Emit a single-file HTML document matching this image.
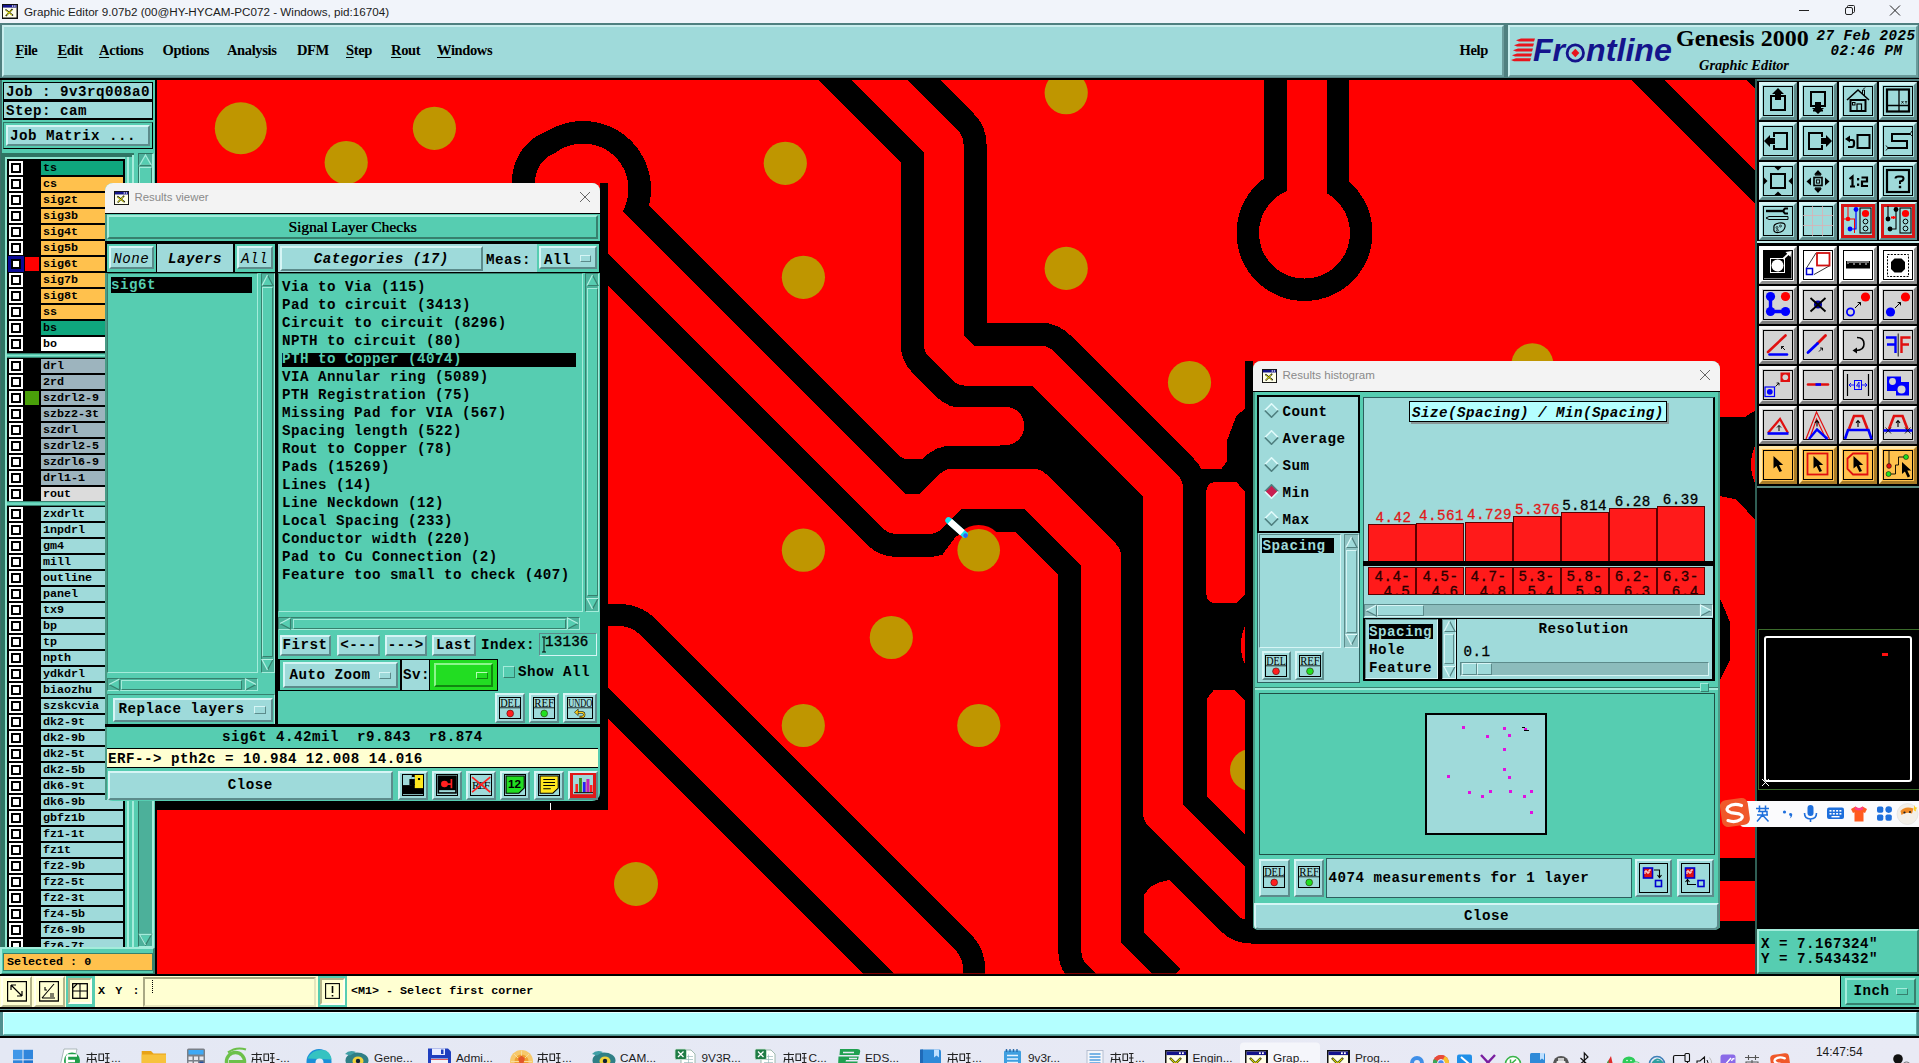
<!DOCTYPE html>
<html><head><meta charset="utf-8"><title>Graphic Editor</title>
<style>
html,body{margin:0;padding:0;width:1919px;height:1063px;overflow:hidden;background:#000;font-family:"Liberation Sans",sans-serif;}
div,span,svg{position:absolute;box-sizing:border-box;}
.m15{font-family:"Liberation Mono",monospace;font-weight:bold;font-size:14.2px;letter-spacing:0.48px;line-height:16px;margin-top:-0.6px;white-space:pre;color:#000;}
.m11{font-family:"Liberation Mono",monospace;font-weight:bold;font-size:11.7px;line-height:14px;white-space:pre;color:#000;}
.ser{font-family:"Liberation Serif",serif;font-weight:bold;white-space:pre;color:#000;}
.sans{font-family:"Liberation Sans",sans-serif;white-space:pre;}
.rc{border-style:solid;border-width:2px;border-color:#d6f5f5 #5c8b8b #5c8b8b #d6f5f5;background:#9edada;}
.sc{border-style:solid;border-width:2px;border-color:#5c8b8b #d6f5f5 #d6f5f5 #5c8b8b;background:#9edada;}
.rt{border-style:solid;border-width:2px;border-color:#a4ecdb #37806e #37806e #a4ecdb;background:#56cdb1;}
.st{border-style:solid;border-width:2px;border-color:#37806e #a4ecdb #a4ecdb #37806e;background:#56cdb1;}

</style></head><body>
<div style="left:0;top:0;width:1919px;height:23px;background:#f1f4fa"></div>
<svg style="left:2px;top:4px" width="16" height="15" viewBox="0 0 16 15"><rect x="0" y="0" width="16" height="15" fill="#111"/><rect x="1" y="1" width="13.5" height="12.5" fill="#ffffe8"/><rect x="1" y="1" width="13.5" height="2.6" fill="#14148c"/><rect x="10" y="1.4" width="1.3" height="1.3" fill="#fff"/><rect x="12.2" y="1.4" width="1.3" height="1.3" fill="#fff"/><path d="M3.5 5.5 L11 11.5 M10.5 5 L3.8 12" stroke="#111" stroke-width="1.5" fill="none"/><path d="M4 6.5 L10 11 M9.8 5.8 L4.3 11.4" stroke="#e8e800" stroke-width="1" fill="none"/></svg>
<div class="sans" style="left:24px;top:4px;font-size:11.67px;line-height:15px;color:#1b1b1b">Graphic Editor 9.07b2 (00@HY-HYCAM-PC072 - Windows, pid:16704)</div>
<svg style="left:1780px;top:-1px" width="139" height="23" viewBox="0 0 139 23"><g stroke="#222" stroke-width="1" fill="none"><path d="M19 11.5 H29"/><rect x="65.5" y="8.5" width="7" height="7" rx="1.5"/><path d="M67.5 8.5 V7.5 Q67.5 6.5 68.5 6.5 H73.5 Q74.5 6.5 74.5 7.5 V12.5 Q74.5 13.5 73.5 13.5 H72.5"/><path d="M110 6.5 L120 16.5 M120 6.5 L110 16.5"/></g></svg>
<div style="left:0;top:23px;width:1919px;height:57px;background:#4f7f7f"></div>
<div style="left:0;top:78px;width:1919px;height:2px;background:#000"></div>
<div class="rc" style="left:2px;top:25px;width:1502px;height:52px;border-width:2px;border-color:#c9eeee #6b9c9c #6b9c9c #c9eeee;background:#9fdada"></div>
<div class="ser" style="left:15.5px;top:41px;font-size:14.5px;line-height:18px;letter-spacing:-0.36px"><span style="position:static;text-decoration:underline;text-underline-offset:2px;text-decoration-thickness:1px">F</span>ile</div>
<div class="ser" style="left:57.5px;top:41px;font-size:14.5px;line-height:18px;letter-spacing:-0.36px"><span style="position:static;text-decoration:underline;text-underline-offset:2px;text-decoration-thickness:1px">E</span>dit</div>
<div class="ser" style="left:99px;top:41px;font-size:14.5px;line-height:18px;letter-spacing:-0.36px"><span style="position:static;text-decoration:underline;text-underline-offset:2px;text-decoration-thickness:1px">A</span>ctions</div>
<div class="ser" style="left:162.5px;top:41px;font-size:14.5px;line-height:18px;letter-spacing:-0.36px">Options</div>
<div class="ser" style="left:227px;top:41px;font-size:14.5px;line-height:18px;letter-spacing:-0.36px">Analysis</div>
<div class="ser" style="left:297px;top:41px;font-size:14.5px;line-height:18px;letter-spacing:-0.36px">DFM</div>
<div class="ser" style="left:346px;top:41px;font-size:14.5px;line-height:18px;letter-spacing:-0.36px"><span style="position:static;text-decoration:underline;text-underline-offset:2px;text-decoration-thickness:1px">S</span>tep</div>
<div class="ser" style="left:391px;top:41px;font-size:14.5px;line-height:18px;letter-spacing:-0.36px"><span style="position:static;text-decoration:underline;text-underline-offset:2px;text-decoration-thickness:1px">R</span>out</div>
<div class="ser" style="left:437px;top:41px;font-size:14.5px;line-height:18px;letter-spacing:-0.36px"><span style="position:static;text-decoration:underline;text-underline-offset:2px;text-decoration-thickness:1px">W</span>indows</div>
<div class="ser" style="left:1459.5px;top:41px;font-size:14.5px;line-height:18px;letter-spacing:-0.36px">Help</div>
<div class="rc" style="left:1508px;top:25px;width:410px;height:52px;border-color:#c9eeee #6b9c9c #6b9c9c #c9eeee;background:#9fdada"></div>
<svg style="left:1510px;top:30px" width="168" height="40" viewBox="1510 30 168 40"><g fill="#e8141c"><path d="M1521 38.5 H1535 L1534 41.5 H1519 L1516 40.2 Z"/><path d="M1519 43.5 H1534 L1533 46.5 H1517 L1514 45.2 Z"/><path d="M1518 48.5 H1533 L1532 51.5 H1516 L1513 50.2 Z"/><path d="M1517 53.5 H1532 L1531 56.5 H1515 L1512 55.2 Z"/><path d="M1516 58.2 H1531 L1530 61.2 H1514 L1511 59.9 Z"/></g><text x="1533" y="61" font-family="Liberation Sans" font-weight="bold" font-style="italic" font-size="31.5" fill="#14148c" textLength="32" lengthAdjust="spacingAndGlyphs">Fr</text><circle cx="1575.3" cy="53" r="8.2" fill="none" stroke="#14148c" stroke-width="2.8"/><path d="M1575.3 48.8 L1579.3 53 L1575.3 57.2 L1571.3 53 Z" fill="#e8141c"/><text x="1586" y="61" font-family="Liberation Sans" font-weight="bold" font-style="italic" font-size="31.5" fill="#14148c" textLength="86" lengthAdjust="spacingAndGlyphs">ntline</text></svg>
<div class="ser" style="left:1676px;top:23.3px;font-size:24px;line-height:30px">Genesis 2000</div>
<div class="ser" style="left:1699px;top:55.8px;font-size:14.4px;line-height:18px;font-style:italic">Graphic Editor</div>
<div class="m15" style="left:1816.5px;top:28.7px;font-style:italic">27 Feb 2025</div>
<div class="m15" style="left:1830.5px;top:43.7px;font-style:italic">02:46 PM</div>
<div style="left:0;top:80px;width:155px;height:895px;background:#56cdb1"></div>
<div style="left:0;top:80px;width:2px;height:895px;background:#3f6f6a"></div>
<div style="left:3px;top:82px;width:150px;height:19px;background:#9fdada;border:1px solid #000;border-width:1px 1px 2px 1px"></div>
<div class="m15" style="left:6px;top:84.7px">Job : 9v3rq008a0</div>
<div style="left:3px;top:101px;width:150px;height:19px;background:#9fdada;border:1px solid #000;border-width:1px 1px 2px 1px"></div>
<div class="m15" style="left:6px;top:103.7px">Step: cam</div>
<div style="left:3px;top:122px;width:150px;height:27px;background:#56cdb1;border:1.3px solid;border-color:#2f7564 #000 #000 #2f7564"></div>
<div class="rc" style="left:6px;top:125px;width:144px;height:21px;"></div>
<div class="m15" style="left:10px;top:128.7px">Job Matrix ...</div>
<div style="left:1px;top:153px;width:126px;height:794px;background:#2f7564"></div>
<div style="left:5px;top:157px;width:122px;height:790px;background:#8fe6d0"></div>
<div style="left:7px;top:159px;width:118px;height:788px;background:#000"></div>
<div style="left:125px;top:153px;width:13px;height:794px;background:#56cdb1"></div>
<div style="left:125px;top:153px;width:9px;height:4px;background:#2f7564"></div>
<div style="left:126.8px;top:157px;width:1.8px;height:790px;background:#a4ecdb"></div>
<div style="left:131.8px;top:155px;width:2.2px;height:792px;background:#a4ecdb"></div>
<div style="left:138px;top:153px;width:15.7px;height:794px;background:#4cb09a;border:1.7px solid #2f7564;border-right:2.4px solid #a4ecdb;border-bottom-color:#a4ecdb"></div>
<svg style="left:138px;top:154px" width="15" height="13" viewBox="0 0 15 13"><path d="M7.5 1 L13.5 11.5 H1.5 Z" fill="#56cdb1" stroke="#a4ecdb" stroke-width="1.3"/><path d="M13.5 11.5 H1.5" stroke="#37806e" stroke-width="1.3"/></svg>
<svg style="left:138px;top:933px" width="15" height="13" viewBox="0 0 15 13"><path d="M7.5 12 L13.5 1.5 H1.5 Z" fill="#56cdb1" stroke="#37806e" stroke-width="1.3"/><path d="M13.5 1.5 H1.5 L7.5 12" fill="none" stroke="#a4ecdb" stroke-width="1.3"/></svg>
<div class="rt" style="left:139px;top:167px;width:13px;height:420px;border-width:1.5px"></div>
<div style="left:9px;top:161px;width:14px;height:14px;background:#fff"></div><div style="left:11px;top:163px;width:10px;height:10px;background:#000"></div><div style="left:13px;top:165px;width:6px;height:6px;background:#fff"></div><div class="m11" style="left:41px;top:161px;width:81.5px;height:14px;background:#0fa67e;padding-left:2px;line-height:14.5px">ts</div>
<div style="left:9px;top:177px;width:14px;height:14px;background:#fff"></div><div style="left:11px;top:179px;width:10px;height:10px;background:#000"></div><div style="left:13px;top:181px;width:6px;height:6px;background:#fff"></div><div class="m11" style="left:41px;top:177px;width:81.5px;height:14px;background:#ffc14d;padding-left:2px;line-height:14.5px">cs</div>
<div style="left:9px;top:193px;width:14px;height:14px;background:#fff"></div><div style="left:11px;top:195px;width:10px;height:10px;background:#000"></div><div style="left:13px;top:197px;width:6px;height:6px;background:#fff"></div><div class="m11" style="left:41px;top:193px;width:81.5px;height:14px;background:#ffc14d;padding-left:2px;line-height:14.5px">sig2t</div>
<div style="left:9px;top:209px;width:14px;height:14px;background:#fff"></div><div style="left:11px;top:211px;width:10px;height:10px;background:#000"></div><div style="left:13px;top:213px;width:6px;height:6px;background:#fff"></div><div class="m11" style="left:41px;top:209px;width:81.5px;height:14px;background:#ffc14d;padding-left:2px;line-height:14.5px">sig3b</div>
<div style="left:9px;top:225px;width:14px;height:14px;background:#fff"></div><div style="left:11px;top:227px;width:10px;height:10px;background:#000"></div><div style="left:13px;top:229px;width:6px;height:6px;background:#fff"></div><div class="m11" style="left:41px;top:225px;width:81.5px;height:14px;background:#ffc14d;padding-left:2px;line-height:14.5px">sig4t</div>
<div style="left:9px;top:241px;width:14px;height:14px;background:#fff"></div><div style="left:11px;top:243px;width:10px;height:10px;background:#000"></div><div style="left:13px;top:245px;width:6px;height:6px;background:#fff"></div><div class="m11" style="left:41px;top:241px;width:81.5px;height:14px;background:#ffc14d;padding-left:2px;line-height:14.5px">sig5b</div>
<div style="left:8px;top:256px;width:16px;height:16px;background:#0a0a96"></div><div style="left:11px;top:259px;width:10px;height:10px;background:#000"></div><div style="left:13px;top:261px;width:6px;height:6px;background:#fff"></div><div style="left:25px;top:257px;width:14px;height:14px;background:#ff0000"></div><div class="m11" style="left:41px;top:257px;width:81.5px;height:14px;background:#ffc14d;padding-left:2px;line-height:14.5px">sig6t</div>
<div style="left:9px;top:273px;width:14px;height:14px;background:#fff"></div><div style="left:11px;top:275px;width:10px;height:10px;background:#000"></div><div style="left:13px;top:277px;width:6px;height:6px;background:#fff"></div><div class="m11" style="left:41px;top:273px;width:81.5px;height:14px;background:#ffc14d;padding-left:2px;line-height:14.5px">sig7b</div>
<div style="left:9px;top:289px;width:14px;height:14px;background:#fff"></div><div style="left:11px;top:291px;width:10px;height:10px;background:#000"></div><div style="left:13px;top:293px;width:6px;height:6px;background:#fff"></div><div class="m11" style="left:41px;top:289px;width:81.5px;height:14px;background:#ffc14d;padding-left:2px;line-height:14.5px">sig8t</div>
<div style="left:9px;top:305px;width:14px;height:14px;background:#fff"></div><div style="left:11px;top:307px;width:10px;height:10px;background:#000"></div><div style="left:13px;top:309px;width:6px;height:6px;background:#fff"></div><div class="m11" style="left:41px;top:305px;width:81.5px;height:14px;background:#ffc14d;padding-left:2px;line-height:14.5px">ss</div>
<div style="left:9px;top:321px;width:14px;height:14px;background:#fff"></div><div style="left:11px;top:323px;width:10px;height:10px;background:#000"></div><div style="left:13px;top:325px;width:6px;height:6px;background:#fff"></div><div class="m11" style="left:41px;top:321px;width:81.5px;height:14px;background:#0fa67e;padding-left:2px;line-height:14.5px">bs</div>
<div style="left:9px;top:337px;width:14px;height:14px;background:#fff"></div><div style="left:11px;top:339px;width:10px;height:10px;background:#000"></div><div style="left:13px;top:341px;width:6px;height:6px;background:#fff"></div><div class="m11" style="left:41px;top:337px;width:81.5px;height:14px;background:#ffffff;padding-left:2px;line-height:14.5px">bo</div>
<div style="left:7px;top:352.5px;width:118px;height:5px;background:#56cdb1;border-top:1px solid #37806e;border-bottom:1px solid #37806e"></div>
<div style="left:7px;top:354.5px;width:118px;height:1.5px;background:#86e2cc"></div>
<div style="left:9px;top:358.5px;width:14px;height:14px;background:#fff"></div><div style="left:11px;top:360.5px;width:10px;height:10px;background:#000"></div><div style="left:13px;top:362.5px;width:6px;height:6px;background:#fff"></div><div class="m11" style="left:41px;top:358.5px;width:81.5px;height:14px;background:#9db4be;padding-left:2px;line-height:14.5px">drl</div>
<div style="left:9px;top:374.5px;width:14px;height:14px;background:#fff"></div><div style="left:11px;top:376.5px;width:10px;height:10px;background:#000"></div><div style="left:13px;top:378.5px;width:6px;height:6px;background:#fff"></div><div class="m11" style="left:41px;top:374.5px;width:81.5px;height:14px;background:#9db4be;padding-left:2px;line-height:14.5px">2rd</div>
<div style="left:9px;top:390.5px;width:14px;height:14px;background:#fff"></div><div style="left:11px;top:392.5px;width:10px;height:10px;background:#000"></div><div style="left:13px;top:394.5px;width:6px;height:6px;background:#fff"></div><div style="left:25px;top:390.5px;width:14px;height:14px;background:#4aa00a"></div><div class="m11" style="left:41px;top:390.5px;width:81.5px;height:14px;background:#9db4be;padding-left:2px;line-height:14.5px">szdrl2-9</div>
<div style="left:9px;top:406.5px;width:14px;height:14px;background:#fff"></div><div style="left:11px;top:408.5px;width:10px;height:10px;background:#000"></div><div style="left:13px;top:410.5px;width:6px;height:6px;background:#fff"></div><div class="m11" style="left:41px;top:406.5px;width:81.5px;height:14px;background:#9db4be;padding-left:2px;line-height:14.5px">szbz2-3t</div>
<div style="left:9px;top:422.5px;width:14px;height:14px;background:#fff"></div><div style="left:11px;top:424.5px;width:10px;height:10px;background:#000"></div><div style="left:13px;top:426.5px;width:6px;height:6px;background:#fff"></div><div class="m11" style="left:41px;top:422.5px;width:81.5px;height:14px;background:#9db4be;padding-left:2px;line-height:14.5px">szdrl</div>
<div style="left:9px;top:438.5px;width:14px;height:14px;background:#fff"></div><div style="left:11px;top:440.5px;width:10px;height:10px;background:#000"></div><div style="left:13px;top:442.5px;width:6px;height:6px;background:#fff"></div><div class="m11" style="left:41px;top:438.5px;width:81.5px;height:14px;background:#9db4be;padding-left:2px;line-height:14.5px">szdrl2-5</div>
<div style="left:9px;top:454.5px;width:14px;height:14px;background:#fff"></div><div style="left:11px;top:456.5px;width:10px;height:10px;background:#000"></div><div style="left:13px;top:458.5px;width:6px;height:6px;background:#fff"></div><div class="m11" style="left:41px;top:454.5px;width:81.5px;height:14px;background:#9db4be;padding-left:2px;line-height:14.5px">szdrl6-9</div>
<div style="left:9px;top:470.5px;width:14px;height:14px;background:#fff"></div><div style="left:11px;top:472.5px;width:10px;height:10px;background:#000"></div><div style="left:13px;top:474.5px;width:6px;height:6px;background:#fff"></div><div class="m11" style="left:41px;top:470.5px;width:81.5px;height:14px;background:#9db4be;padding-left:2px;line-height:14.5px">drl1-1</div>
<div style="left:9px;top:486.5px;width:14px;height:14px;background:#fff"></div><div style="left:11px;top:488.5px;width:10px;height:10px;background:#000"></div><div style="left:13px;top:490.5px;width:6px;height:6px;background:#fff"></div><div class="m11" style="left:41px;top:486.5px;width:81.5px;height:14px;background:#dcdcdc;padding-left:2px;line-height:14.5px">rout</div>
<div style="left:7px;top:501px;width:118px;height:5px;background:#56cdb1;border-top:1px solid #37806e;border-bottom:1px solid #37806e"></div>
<div style="left:7px;top:503px;width:118px;height:1.5px;background:#6fd8c0"></div>
<div style="left:0;top:500px;width:127px;height:447px;overflow:hidden">
<div style="left:9px;top:7px;width:14px;height:14px;background:#fff"></div><div style="left:11px;top:9px;width:10px;height:10px;background:#000"></div><div style="left:13px;top:11px;width:6px;height:6px;background:#fff"></div><div class="m11" style="left:41px;top:7px;width:81.5px;height:14px;background:#9fdada;padding-left:2px;line-height:14.5px">zxdrlt</div>
<div style="left:9px;top:23px;width:14px;height:14px;background:#fff"></div><div style="left:11px;top:25px;width:10px;height:10px;background:#000"></div><div style="left:13px;top:27px;width:6px;height:6px;background:#fff"></div><div class="m11" style="left:41px;top:23px;width:81.5px;height:14px;background:#9fdada;padding-left:2px;line-height:14.5px">1npdrl</div>
<div style="left:9px;top:39px;width:14px;height:14px;background:#fff"></div><div style="left:11px;top:41px;width:10px;height:10px;background:#000"></div><div style="left:13px;top:43px;width:6px;height:6px;background:#fff"></div><div class="m11" style="left:41px;top:39px;width:81.5px;height:14px;background:#9fdada;padding-left:2px;line-height:14.5px">gm4</div>
<div style="left:9px;top:55px;width:14px;height:14px;background:#fff"></div><div style="left:11px;top:57px;width:10px;height:10px;background:#000"></div><div style="left:13px;top:59px;width:6px;height:6px;background:#fff"></div><div class="m11" style="left:41px;top:55px;width:81.5px;height:14px;background:#9fdada;padding-left:2px;line-height:14.5px">mill</div>
<div style="left:9px;top:71px;width:14px;height:14px;background:#fff"></div><div style="left:11px;top:73px;width:10px;height:10px;background:#000"></div><div style="left:13px;top:75px;width:6px;height:6px;background:#fff"></div><div class="m11" style="left:41px;top:71px;width:81.5px;height:14px;background:#9fdada;padding-left:2px;line-height:14.5px">outline</div>
<div style="left:9px;top:87px;width:14px;height:14px;background:#fff"></div><div style="left:11px;top:89px;width:10px;height:10px;background:#000"></div><div style="left:13px;top:91px;width:6px;height:6px;background:#fff"></div><div class="m11" style="left:41px;top:87px;width:81.5px;height:14px;background:#9fdada;padding-left:2px;line-height:14.5px">panel</div>
<div style="left:9px;top:103px;width:14px;height:14px;background:#fff"></div><div style="left:11px;top:105px;width:10px;height:10px;background:#000"></div><div style="left:13px;top:107px;width:6px;height:6px;background:#fff"></div><div class="m11" style="left:41px;top:103px;width:81.5px;height:14px;background:#9fdada;padding-left:2px;line-height:14.5px">tx9</div>
<div style="left:9px;top:119px;width:14px;height:14px;background:#fff"></div><div style="left:11px;top:121px;width:10px;height:10px;background:#000"></div><div style="left:13px;top:123px;width:6px;height:6px;background:#fff"></div><div class="m11" style="left:41px;top:119px;width:81.5px;height:14px;background:#9fdada;padding-left:2px;line-height:14.5px">bp</div>
<div style="left:9px;top:135px;width:14px;height:14px;background:#fff"></div><div style="left:11px;top:137px;width:10px;height:10px;background:#000"></div><div style="left:13px;top:139px;width:6px;height:6px;background:#fff"></div><div class="m11" style="left:41px;top:135px;width:81.5px;height:14px;background:#9fdada;padding-left:2px;line-height:14.5px">tp</div>
<div style="left:9px;top:151px;width:14px;height:14px;background:#fff"></div><div style="left:11px;top:153px;width:10px;height:10px;background:#000"></div><div style="left:13px;top:155px;width:6px;height:6px;background:#fff"></div><div class="m11" style="left:41px;top:151px;width:81.5px;height:14px;background:#9fdada;padding-left:2px;line-height:14.5px">npth</div>
<div style="left:9px;top:167px;width:14px;height:14px;background:#fff"></div><div style="left:11px;top:169px;width:10px;height:10px;background:#000"></div><div style="left:13px;top:171px;width:6px;height:6px;background:#fff"></div><div class="m11" style="left:41px;top:167px;width:81.5px;height:14px;background:#9fdada;padding-left:2px;line-height:14.5px">ydkdrl</div>
<div style="left:9px;top:183px;width:14px;height:14px;background:#fff"></div><div style="left:11px;top:185px;width:10px;height:10px;background:#000"></div><div style="left:13px;top:187px;width:6px;height:6px;background:#fff"></div><div class="m11" style="left:41px;top:183px;width:81.5px;height:14px;background:#9fdada;padding-left:2px;line-height:14.5px">biaozhu</div>
<div style="left:9px;top:199px;width:14px;height:14px;background:#fff"></div><div style="left:11px;top:201px;width:10px;height:10px;background:#000"></div><div style="left:13px;top:203px;width:6px;height:6px;background:#fff"></div><div class="m11" style="left:41px;top:199px;width:81.5px;height:14px;background:#9fdada;padding-left:2px;line-height:14.5px">szskcvia</div>
<div style="left:9px;top:215px;width:14px;height:14px;background:#fff"></div><div style="left:11px;top:217px;width:10px;height:10px;background:#000"></div><div style="left:13px;top:219px;width:6px;height:6px;background:#fff"></div><div class="m11" style="left:41px;top:215px;width:81.5px;height:14px;background:#9fdada;padding-left:2px;line-height:14.5px">dk2-9t</div>
<div style="left:9px;top:231px;width:14px;height:14px;background:#fff"></div><div style="left:11px;top:233px;width:10px;height:10px;background:#000"></div><div style="left:13px;top:235px;width:6px;height:6px;background:#fff"></div><div class="m11" style="left:41px;top:231px;width:81.5px;height:14px;background:#9fdada;padding-left:2px;line-height:14.5px">dk2-9b</div>
<div style="left:9px;top:247px;width:14px;height:14px;background:#fff"></div><div style="left:11px;top:249px;width:10px;height:10px;background:#000"></div><div style="left:13px;top:251px;width:6px;height:6px;background:#fff"></div><div class="m11" style="left:41px;top:247px;width:81.5px;height:14px;background:#9fdada;padding-left:2px;line-height:14.5px">dk2-5t</div>
<div style="left:9px;top:263px;width:14px;height:14px;background:#fff"></div><div style="left:11px;top:265px;width:10px;height:10px;background:#000"></div><div style="left:13px;top:267px;width:6px;height:6px;background:#fff"></div><div class="m11" style="left:41px;top:263px;width:81.5px;height:14px;background:#9fdada;padding-left:2px;line-height:14.5px">dk2-5b</div>
<div style="left:9px;top:279px;width:14px;height:14px;background:#fff"></div><div style="left:11px;top:281px;width:10px;height:10px;background:#000"></div><div style="left:13px;top:283px;width:6px;height:6px;background:#fff"></div><div class="m11" style="left:41px;top:279px;width:81.5px;height:14px;background:#9fdada;padding-left:2px;line-height:14.5px">dk6-9t</div>
<div style="left:9px;top:295px;width:14px;height:14px;background:#fff"></div><div style="left:11px;top:297px;width:10px;height:10px;background:#000"></div><div style="left:13px;top:299px;width:6px;height:6px;background:#fff"></div><div class="m11" style="left:41px;top:295px;width:81.5px;height:14px;background:#9fdada;padding-left:2px;line-height:14.5px">dk6-9b</div>
<div style="left:9px;top:311px;width:14px;height:14px;background:#fff"></div><div style="left:11px;top:313px;width:10px;height:10px;background:#000"></div><div style="left:13px;top:315px;width:6px;height:6px;background:#fff"></div><div class="m11" style="left:41px;top:311px;width:81.5px;height:14px;background:#9fdada;padding-left:2px;line-height:14.5px">gbfz1b</div>
<div style="left:9px;top:327px;width:14px;height:14px;background:#fff"></div><div style="left:11px;top:329px;width:10px;height:10px;background:#000"></div><div style="left:13px;top:331px;width:6px;height:6px;background:#fff"></div><div class="m11" style="left:41px;top:327px;width:81.5px;height:14px;background:#9fdada;padding-left:2px;line-height:14.5px">fz1-1t</div>
<div style="left:9px;top:343px;width:14px;height:14px;background:#fff"></div><div style="left:11px;top:345px;width:10px;height:10px;background:#000"></div><div style="left:13px;top:347px;width:6px;height:6px;background:#fff"></div><div class="m11" style="left:41px;top:343px;width:81.5px;height:14px;background:#9fdada;padding-left:2px;line-height:14.5px">fz1t</div>
<div style="left:9px;top:359px;width:14px;height:14px;background:#fff"></div><div style="left:11px;top:361px;width:10px;height:10px;background:#000"></div><div style="left:13px;top:363px;width:6px;height:6px;background:#fff"></div><div class="m11" style="left:41px;top:359px;width:81.5px;height:14px;background:#9fdada;padding-left:2px;line-height:14.5px">fz2-9b</div>
<div style="left:9px;top:375px;width:14px;height:14px;background:#fff"></div><div style="left:11px;top:377px;width:10px;height:10px;background:#000"></div><div style="left:13px;top:379px;width:6px;height:6px;background:#fff"></div><div class="m11" style="left:41px;top:375px;width:81.5px;height:14px;background:#9fdada;padding-left:2px;line-height:14.5px">fz2-5t</div>
<div style="left:9px;top:391px;width:14px;height:14px;background:#fff"></div><div style="left:11px;top:393px;width:10px;height:10px;background:#000"></div><div style="left:13px;top:395px;width:6px;height:6px;background:#fff"></div><div class="m11" style="left:41px;top:391px;width:81.5px;height:14px;background:#9fdada;padding-left:2px;line-height:14.5px">fz2-3t</div>
<div style="left:9px;top:407px;width:14px;height:14px;background:#fff"></div><div style="left:11px;top:409px;width:10px;height:10px;background:#000"></div><div style="left:13px;top:411px;width:6px;height:6px;background:#fff"></div><div class="m11" style="left:41px;top:407px;width:81.5px;height:14px;background:#9fdada;padding-left:2px;line-height:14.5px">fz4-5b</div>
<div style="left:9px;top:423px;width:14px;height:14px;background:#fff"></div><div style="left:11px;top:425px;width:10px;height:10px;background:#000"></div><div style="left:13px;top:427px;width:6px;height:6px;background:#fff"></div><div class="m11" style="left:41px;top:423px;width:81.5px;height:14px;background:#9fdada;padding-left:2px;line-height:14.5px">fz6-9b</div>
<div style="left:9px;top:439px;width:14px;height:14px;background:#fff"></div><div style="left:11px;top:441px;width:10px;height:10px;background:#000"></div><div style="left:13px;top:443px;width:6px;height:6px;background:#fff"></div><div class="m11" style="left:41px;top:439px;width:81.5px;height:14px;background:#9fdada;padding-left:2px;line-height:14.5px">fz6-7t</div>
</div>
<div class="rt" style="left:0px;top:947px;width:155px;height:28px;border-width:2px"></div>
<div style="left:3px;top:952.5px;width:150px;height:18px;background:#ffc14d;border:1px solid #37806e"></div>
<div class="m11" style="left:7px;top:954.5px;">Selected : 0</div>
<svg style="left:155px;top:79px;" width="1602" height="897" viewBox="155 79 1602 897" shape-rendering="crispEdges">
<defs><clipPath id="cv"><rect x="157" y="80" width="1598" height="893.5"/></clipPath></defs>
<rect x="155" y="79" width="1602" height="897" fill="#000"/>
<rect x="157" y="80" width="1598" height="893.5" fill="#ff0000"/>
<g clip-path="url(#cv)" fill="none" stroke-linejoin="round" stroke-linecap="butt">
<path d="M575 192 L897 514 L928.3 514 L953.5 488.5 L1032.3 488.5 L1101.3 557.5 L1101.3 950.8 L1150 999.5" stroke="#000" stroke-width="86"/>
<path d="M839.3 40 L943.5 144.2 L943.5 343 L966 365.7 L1040 365.7 L1163 488.7 L1163 812.6 L1250.9 900.5 L1800 900.5" stroke="#000" stroke-width="86"/>
<path d="M540 656 L619 656 L933.3 970.3 L933.3 1000" stroke="#000" stroke-width="104"/>
<path d="M1306.5 40 L1306.5 233" stroke="#000" stroke-width="84.4"/>
<path d="M1618 50 L1780 212" stroke="#000" stroke-width="23.8"/>
<path d="M1030 421 L1140 531" stroke="#000" stroke-width="26"/>
<g fill="#000" stroke="none">
<circle cx="583" cy="189" r="68"/><circle cx="565" cy="181" r="53"/>
<circle cx="1304.5" cy="233" r="68"/>
<polygon points="1746,80 1756,90 1756,80"/>
<rect x="1000" y="404" width="66" height="46"/>
<polygon points="1142,851 1169.5,880 1160,882.2 1150,887 1144.3,894.5 1142,894.5"/>
<polygon points="898.5,455.6 904.8,458.7 922.5,458.7 926,456 920,476 904,473"/>
<polygon points="1197,469 1221.2,469 1227.2,461.2 1227.2,440.2 1236.2,416 1245.3,408.6 1256,408.6 1256,860 1200,860"/>
<polygon points="1715,417 1745,417 1756,410 1756,520.5 1736,499.4 1715,495"/>
<polygon points="1715,598.6 1720,598.6 1730,622 1730,660 1720,680 1715,680"/>
</g>
<path d="M575 192 L897 514 L928.3 514 L953.5 488.5 L1032.3 488.5 L1101.3 557.5 L1101.3 950.8 L1150 999.5" stroke="#ff0000" stroke-width="40"/>
<path d="M839.3 40 L943.5 144.2 L943.5 343 L966 365.7 L1040 365.7 L1163 488.7 L1163 812.6 L1250.9 900.5 L1800 900.5" stroke="#ff0000" stroke-width="40"/>
<path d="M540 656 L619 656 L933.3 970.3 L933.3 1000" stroke="#ff0000" stroke-width="60"/>
<path d="M1306.5 40 L1306.5 233" stroke="#ff0000" stroke-width="40"/>
<g fill="#ff0000" stroke="none">
<circle cx="583" cy="189" r="45.5"/><circle cx="566" cy="182" r="31"/>
<circle cx="1304.5" cy="233" r="45.5"/>
<rect x="940" y="406.7" width="84.4" height="38.6" rx="19.3"/>
<circle cx="978.7" cy="550.2" r="25.3" shape-rendering="auto"/>
<polygon points="940.5,558 943.5,553 957,535.2 964,541 958,560"/>
<path d="M1206.2 493 Q1206.2 481.7 1218 481.7 L1236 481.7 L1245.3 492 L1245.3 594 L1236 603.2 L1216 603.2 Q1206.2 603.2 1206.2 593 Z"/>
<polygon points="1206.7,699 1214,689.8 1234.6,689.8 1244.8,700 1244.8,834.2 1206.7,796.1"/>
<circle cx="1286.3" cy="645.4" r="45.5"/>
<circle cx="1796.5" cy="464.5" r="45.5"/>
</g>
<g fill="#bf9600" stroke="none" shape-rendering="auto">
<circle cx="240.8" cy="128.3" r="26"/>
<circle cx="346.2" cy="162.5" r="21.6"/>
<circle cx="434.4" cy="128.3" r="21.6"/>
<circle cx="785.3" cy="163.3" r="21.6"/>
<circle cx="803.4" cy="277.3" r="21.6"/>
<circle cx="1066.2" cy="92.7" r="21.6"/>
<circle cx="1066.2" cy="268.4" r="21.6"/>
<circle cx="1189.5" cy="382.5" r="21.6"/>
<circle cx="1532.4" cy="364.2" r="21"/>
<circle cx="803.4" cy="550.2" r="21.6"/>
<circle cx="978.7" cy="550.2" r="21.3"/>
<circle cx="891.3" cy="637.5" r="21.6"/>
<circle cx="803.3" cy="725.5" r="21.6"/>
<circle cx="978.8" cy="725.5" r="21.6"/>
<circle cx="636" cy="884" r="22"/>
<circle cx="1251" cy="770" r="21"/>
</g>
<g shape-rendering="auto"><line x1="948.6" y1="520.5" x2="964.6" y2="534.6" stroke="#18e0f0" stroke-width="6.6" stroke-linecap="round"/>
<circle cx="965.6" cy="535.6" r="2.3" fill="#3060f0"/>
<line x1="949.8" y1="521.5" x2="962.4" y2="532.7" stroke="#fff" stroke-width="6.8" stroke-linecap="butt"/></g>
</g>
</svg>
<div style="left:1755px;top:79px;width:164px;height:896.5px;background:#000"></div>
<div style="left:1755px;top:79px;width:2px;height:896.5px;background:#2f5f55"></div>
<div style="left:1757px;top:79px;width:162px;height:2px;background:#4f7f7f"></div>
<div style="left:1758.5px;top:82px;width:38.4px;height:38px;background:#9fdada;border:3px solid;border-color:#d5f5f5 #5f8b8b #5f8b8b #d5f5f5"></div><div style="left:1762.5px;top:86px;width:30.4px;height:30px;border:1px solid #000"></div><svg style="left:1762.7px;top:86px" width="30" height="30" viewBox="0 0 30 30"><rect x="8" y="10" width="14" height="14" fill="none" stroke="#000" stroke-width="2"/><polygon points="15,2 21,8 18,8 18,14 12,14 12,8 9,8" fill="#000"/></svg>
<div style="left:1798.5px;top:82px;width:38.4px;height:38px;background:#9fdada;border:3px solid;border-color:#d5f5f5 #5f8b8b #5f8b8b #d5f5f5"></div><div style="left:1802.5px;top:86px;width:30.4px;height:30px;border:1px solid #000"></div><svg style="left:1802.7px;top:86px" width="30" height="30" viewBox="0 0 30 30"><rect x="8" y="6" width="14" height="14" fill="none" stroke="#000" stroke-width="2"/><polygon points="15,28 21,22 18,22 18,16 12,16 12,22 9,22" fill="#000"/><rect x="10" y="24" width="10" height="1.5" fill="#000"/></svg>
<div style="left:1838.5px;top:82px;width:38.4px;height:38px;background:#9fdada;border:3px solid;border-color:#d5f5f5 #5f8b8b #5f8b8b #d5f5f5"></div><div style="left:1842.5px;top:86px;width:30.4px;height:30px;border:1px solid #000"></div><svg style="left:1842.7px;top:86px" width="30" height="30" viewBox="0 0 30 30"><path d="M4 14 L15 4 L26 14" fill="none" stroke="#000" stroke-width="1.6"/><rect x="7.5" y="14" width="15" height="11" fill="none" stroke="#000" stroke-width="2"/><rect x="14" y="18" width="4.5" height="7" fill="none" stroke="#000" stroke-width="1.2"/><rect x="9.5" y="16.5" width="2.5" height="2.5" fill="none" stroke="#000" stroke-width="1"/><path d="M19.5 8 V4 H21.5 V10 M20.5 3 L22 1.5" stroke="#000" stroke-width="1" fill="none"/></svg>
<div style="left:1878.5px;top:82px;width:38.4px;height:38px;background:#9fdada;border:3px solid;border-color:#d5f5f5 #5f8b8b #5f8b8b #d5f5f5"></div><div style="left:1882.5px;top:86px;width:30.4px;height:30px;border:1px solid #000"></div><svg style="left:1882.7px;top:86px" width="30" height="30" viewBox="0 0 30 30"><rect x="4" y="3.5" width="22" height="22" fill="none" stroke="#000" stroke-width="2.2"/><path d="M16 4 V25 M4 19.5 H26" stroke="#000" stroke-width="1.3"/><path d="M18.5 15 L20.5 17.5 M20.5 15 L18.5 17.5 M22 15 L23 16.3 L24 15 M23 16.3 V17.6" stroke="#000" stroke-width="0.8" fill="none"/></svg>
<div style="left:1758.5px;top:122px;width:38.4px;height:38px;background:#9fdada;border:3px solid;border-color:#d5f5f5 #5f8b8b #5f8b8b #d5f5f5"></div><div style="left:1762.5px;top:126px;width:30.4px;height:30px;border:1px solid #000"></div><svg style="left:1762.7px;top:126px" width="30" height="30" viewBox="0 0 30 30"><path d="M11 11 V7 H24 V23 H11 V19" fill="none" stroke="#000" stroke-width="2"/><polygon points="1,15 7,9 7,12 12,12 12,18 7,18 7,21" fill="#000"/></svg>
<div style="left:1798.5px;top:122px;width:38.4px;height:38px;background:#9fdada;border:3px solid;border-color:#d5f5f5 #5f8b8b #5f8b8b #d5f5f5"></div><div style="left:1802.5px;top:126px;width:30.4px;height:30px;border:1px solid #000"></div><svg style="left:1802.7px;top:126px" width="30" height="30" viewBox="0 0 30 30"><path d="M19 11 V7 H6 V23 H19 V19" fill="none" stroke="#000" stroke-width="2"/><polygon points="29,15 23,9 23,12 18,12 18,18 23,18 23,21" fill="#000"/></svg>
<div style="left:1838.5px;top:122px;width:38.4px;height:38px;background:#9fdada;border:3px solid;border-color:#d5f5f5 #5f8b8b #5f8b8b #d5f5f5"></div><div style="left:1842.5px;top:126px;width:30.4px;height:30px;border:1px solid #000"></div><svg style="left:1842.7px;top:126px" width="30" height="30" viewBox="0 0 30 30"><rect x="14.5" y="9" width="12" height="13" fill="none" stroke="#000" stroke-width="2"/><path d="M5 21 H9 Q11 21 11 18 V16 Q11 14 9 14 H6" fill="none" stroke="#000" stroke-width="2.2"/><polygon points="2,13 7,9.5 7,16.5" fill="#000"/></svg>
<div style="left:1878.5px;top:122px;width:38.4px;height:38px;background:#9fdada;border:3px solid;border-color:#d5f5f5 #5f8b8b #5f8b8b #d5f5f5"></div><div style="left:1882.5px;top:126px;width:30.4px;height:30px;border:1px solid #000"></div><svg style="left:1882.7px;top:126px" width="30" height="30" viewBox="0 0 30 30"><path d="M27 8 H9 V15 H24 V22 H5" fill="none" stroke="#000" stroke-width="2"/><path d="M29 5 L27 8 L29 10 M3 19.5 L5 22 L3 24.5" fill="none" stroke="#000" stroke-width="0.9"/></svg>
<div style="left:1758.5px;top:162px;width:38.4px;height:38px;background:#9fdada;border:3px solid;border-color:#d5f5f5 #5f8b8b #5f8b8b #d5f5f5"></div><div style="left:1762.5px;top:166px;width:30.4px;height:30px;border:1px solid #000"></div><svg style="left:1762.7px;top:166px" width="30" height="30" viewBox="0 0 30 30"><rect x="8" y="8" width="14" height="14" fill="none" stroke="#000" stroke-width="2"/><polygon points="15,4.5 11,0.5 19,0.5" fill="#000"/><polygon points="15,25.5 11,29.5 19,29.5" fill="#000"/><polygon points="4.5,15 0.5,11 0.5,19" fill="#000"/><polygon points="25.5,15 29.5,11 29.5,19" fill="#000"/><rect x="12" y="0" width="6" height="1.5" fill="#000"/><rect x="12" y="28.5" width="6" height="1.5" fill="#000"/></svg>
<div style="left:1798.5px;top:162px;width:38.4px;height:38px;background:#9fdada;border:3px solid;border-color:#d5f5f5 #5f8b8b #5f8b8b #d5f5f5"></div><div style="left:1802.5px;top:166px;width:30.4px;height:30px;border:1px solid #000"></div><svg style="left:1802.7px;top:166px" width="30" height="30" viewBox="0 0 30 30"><rect x="11" y="11.5" width="8" height="8" fill="none" stroke="#000" stroke-width="1.6"/><rect x="13.4" y="13.9" width="3.2" height="3.2" fill="none" stroke="#000" stroke-width="1"/><polygon points="15,4 19,8.5 11,8.5" fill="#000"/><polygon points="15,27 19,22.5 11,22.5" fill="#000"/><polygon points="3.5,15.5 8,11.5 8,19.5" fill="#000"/><polygon points="26.5,15.5 22,11.5 22,19.5" fill="#000"/><rect x="12" y="8.2" width="6" height="1.4" fill="#000"/><rect x="12" y="21.4" width="6" height="1.4" fill="#000"/></svg>
<div style="left:1838.5px;top:162px;width:38.4px;height:38px;background:#9fdada;border:3px solid;border-color:#d5f5f5 #5f8b8b #5f8b8b #d5f5f5"></div><div style="left:1842.5px;top:166px;width:30.4px;height:30px;border:1px solid #000"></div><svg style="left:1842.7px;top:166px" width="30" height="30" viewBox="0 0 30 30"><path d="M6.5 13 L9.5 10.5 V20.5 M7 20.5 H12" fill="none" stroke="#000" stroke-width="2.2"/><rect x="14" y="12" width="2.2" height="2.4" fill="#000"/><rect x="14" y="17.5" width="2.2" height="2.4" fill="#000"/><path d="M18.5 11.5 H24 V15.5 H19 V20 H25" fill="none" stroke="#000" stroke-width="2.2"/></svg>
<div style="left:1878.5px;top:162px;width:38.4px;height:38px;background:#9fdada;border:3px solid;border-color:#d5f5f5 #5f8b8b #5f8b8b #d5f5f5"></div><div style="left:1882.5px;top:166px;width:30.4px;height:30px;border:1px solid #000"></div><svg style="left:1882.7px;top:166px" width="30" height="30" viewBox="0 0 30 30"><rect x="4" y="4" width="22" height="22" fill="none" stroke="#000" stroke-width="2.2"/><path d="M12.5 12.5 Q12.5 10.5 15.5 10.5 H18 Q20.5 10.5 20.5 12.5 Q20.5 15 17 15.5 V18" fill="none" stroke="#000" stroke-width="2"/><rect x="15.8" y="19.8" width="2.4" height="2.4" fill="#000"/></svg>
<div style="left:1758.5px;top:202px;width:38.4px;height:38px;background:#9fdada;border:3px solid;border-color:#d5f5f5 #5f8b8b #5f8b8b #d5f5f5"></div><div style="left:1762.5px;top:206px;width:30.4px;height:30px;border:1px solid #000"></div><svg style="left:1762.7px;top:206px" width="30" height="30" viewBox="0 0 30 30"><path d="M3 5 H20" stroke="#000" stroke-width="2.4"/><path d="M25 2.5 H22 Q19 5 22 7.5 H25" fill="none" stroke="#000" stroke-width="2"/><path d="M3 12 L6 10.5 H25 V13.5 H6 Z" fill="none" stroke="#000" stroke-width="1"/><path d="M11 22 Q10 18 16 17 Q23 16 22 21 Q21 26 15 26.5 Q10 27 11 22 Z" fill="none" stroke="#000" stroke-width="1.2"/><circle cx="14" cy="21.5" r="1" fill="none" stroke="#000" stroke-width=".7"/><circle cx="17.5" cy="20" r="1" fill="none" stroke="#000" stroke-width=".7"/><circle cx="14.5" cy="24.3" r="0.9" fill="none" stroke="#000" stroke-width=".7"/></svg>
<div style="left:1798.5px;top:202px;width:38.4px;height:38px;background:#9fdada;border:3px solid;border-color:#d5f5f5 #5f8b8b #5f8b8b #d5f5f5"></div><div style="left:1802.5px;top:206px;width:30.4px;height:30px;border:1px solid #000"></div><svg style="left:1802.7px;top:206px" width="30" height="30" viewBox="0 0 30 30"><path d="M9.5 0 V30 M19.5 0 V30 M0 9.5 H30 M0 19.5 H30" stroke="#dcb0b4" stroke-width="0.8"/></svg>
<div style="left:1838.5px;top:202px;width:38.4px;height:38px;background:#9fdada;border:3px solid;border-color:#d5f5f5 #5f8b8b #5f8b8b #d5f5f5"></div><div style="left:1840.5px;top:204px;width:34.4px;height:34px;background:#d81818"></div><div style="left:1843.5px;top:207px;width:28.4px;height:28px;background:#9fdada"></div><svg style="left:1842.7px;top:206px" width="30" height="30" viewBox="0 0 30 30"><path d="M5 0 V13 M1 13 H12 M11.5 13 V27" stroke="#ff0000" stroke-width="1" fill="none"/><circle cx="5" cy="13" r="2.3" fill="#ff0000"/><path d="M13 3 V23 H7" stroke="#0000ff" stroke-width="1.2" fill="none"/><circle cx="13" cy="3.5" r="2.4" fill="#0000ff"/><circle cx="7" cy="23" r="2.4" fill="#0000ff"/><rect x="17" y="2" width="11" height="25" fill="none" stroke="#000" stroke-width="1.1"/><circle cx="22.5" cy="7.5" r="3.6" fill="#ff0000"/><circle cx="22.5" cy="15.5" r="2.4" fill="none" stroke="#000" stroke-width="1"/><circle cx="22.5" cy="22.5" r="2.4" fill="none" stroke="#000" stroke-width="1"/></svg>
<div style="left:1878.5px;top:202px;width:38.4px;height:38px;background:#9fdada;border:3px solid;border-color:#d5f5f5 #5f8b8b #5f8b8b #d5f5f5"></div><div style="left:1880.5px;top:204px;width:34.4px;height:34px;background:#d81818"></div><div style="left:1883.5px;top:207px;width:28.4px;height:28px;background:#9fdada"></div><svg style="left:1882.7px;top:206px" width="30" height="30" viewBox="0 0 30 30"><path d="M5 0 V13 M13 3 V23 H7" stroke="#000" stroke-width="1.1" fill="none"/><path d="M8 11.5 H13 M9 10 V13 M10.5 10 V13 M12 10 V13" stroke="#ff0000" stroke-width="1"/><circle cx="5" cy="13" r="2.4" fill="#000"/><circle cx="13" cy="3.5" r="2.4" fill="#000"/><circle cx="7" cy="23" r="2.4" fill="#000"/><rect x="17" y="2" width="11" height="25" fill="none" stroke="#000" stroke-width="1.1"/><circle cx="22.5" cy="7.5" r="3.6" fill="#ff0000"/><circle cx="22.5" cy="15.5" r="2.4" fill="none" stroke="#000" stroke-width="1"/><circle cx="22.5" cy="22.5" r="2.4" fill="none" stroke="#000" stroke-width="1"/></svg>
<div style="left:1758.5px;top:246px;width:38.4px;height:38px;background:#ffffff;border:3px solid;border-color:#ffffff #8e8e8e #8e8e8e #ffffff"></div><div style="left:1762.5px;top:250px;width:30.4px;height:30px;border:1px solid #000"></div><svg style="left:1762.7px;top:250px" width="30" height="30" viewBox="0 0 30 30"><rect x="0.5" y="0.5" width="28" height="28" fill="#000"/><rect x="7.5" y="8.5" width="14" height="14" fill="none" stroke="#fff" stroke-width="1"/><circle cx="14.5" cy="15.5" r="6" fill="#fff"/><path d="M20 9 L27 2.5" stroke="#fff" stroke-width="1.8"/><polygon points="28.5,1 22.5,2 27.5,7" fill="#fff"/></svg>
<div style="left:1798.5px;top:246px;width:38.4px;height:38px;background:#ffffff;border:3px solid;border-color:#ffffff #8e8e8e #8e8e8e #ffffff"></div><div style="left:1802.5px;top:250px;width:30.4px;height:30px;border:1px solid #000"></div><svg style="left:1802.7px;top:250px" width="30" height="30" viewBox="0 0 30 30"><path d="M3.5 18 L13 3 M11 24.5 L27 15.5" stroke="#000" stroke-width="0.8"/><rect x="14" y="3" width="12.5" height="12.5" fill="none" stroke="#d01010" stroke-width="1.8"/><rect x="3.5" y="18.5" width="6" height="6" fill="none" stroke="#0000d0" stroke-width="1.5"/></svg>
<div style="left:1838.5px;top:246px;width:38.4px;height:38px;background:#ffffff;border:3px solid;border-color:#ffffff #8e8e8e #8e8e8e #ffffff"></div><div style="left:1842.5px;top:250px;width:30.4px;height:30px;border:1px solid #000"></div><svg style="left:1842.7px;top:250px" width="30" height="30" viewBox="0 0 30 30"><rect x="3" y="11" width="24" height="7.5" fill="#000"/><path d="M5 11 V14 M7 11 V13 M9 11 V13 M11 11 V15 M13 11 V13 M15 11 V13 M17 11 V15 M19 11 V13 M21 11 V13 M23 11 V15 M25 11 V13" stroke="#fff" stroke-width="0.9"/></svg>
<div style="left:1878.5px;top:246px;width:38.4px;height:38px;background:#ffffff;border:3px solid;border-color:#ffffff #8e8e8e #8e8e8e #ffffff"></div><div style="left:1882.5px;top:250px;width:30.4px;height:30px;border:1px solid #000"></div><svg style="left:1882.7px;top:250px" width="30" height="30" viewBox="0 0 30 30"><rect x="4.5" y="4.5" width="21" height="22" fill="none" stroke="#000" stroke-width="1" stroke-dasharray="2 1.3"/><polygon points="11.5,8.5 18.5,8.5 22,12 22,19 18.5,22.5 11.5,22.5 8,19 8,12" fill="#000"/></svg>
<div style="left:1758.5px;top:286px;width:38.4px;height:38px;background:#d3d3d3;border:3px solid;border-color:#f8f8f8 #7e7e7e #7e7e7e #f8f8f8"></div><div style="left:1762.5px;top:290px;width:30.4px;height:30px;border:1px solid #000"></div><svg style="left:1762.7px;top:290px" width="30" height="30" viewBox="0 0 30 30"><path d="M7.5 6.5 V21.5 H22" stroke="#0000ff" stroke-width="3.4" fill="none"/><circle cx="7.5" cy="6.5" r="4.6" fill="#0000ff"/><circle cx="7.5" cy="21.5" r="4.6" fill="#0000ff"/><circle cx="22.5" cy="21.5" r="4.6" fill="#0000ff"/><circle cx="22.5" cy="6.5" r="4.6" fill="#ff0000"/></svg>
<div style="left:1798.5px;top:286px;width:38.4px;height:38px;background:#d3d3d3;border:3px solid;border-color:#f8f8f8 #7e7e7e #7e7e7e #f8f8f8"></div><div style="left:1802.5px;top:290px;width:30.4px;height:30px;border:1px solid #000"></div><svg style="left:1802.7px;top:290px" width="30" height="30" viewBox="0 0 30 30"><circle cx="15" cy="14.5" r="4" fill="#0000a0"/><path d="M7.5 8 L22.5 21.5 M22.5 8 L7.5 21.5" stroke="#000" stroke-width="1.8"/></svg>
<div style="left:1838.5px;top:286px;width:38.4px;height:38px;background:#d3d3d3;border:3px solid;border-color:#f8f8f8 #7e7e7e #7e7e7e #f8f8f8"></div><div style="left:1842.5px;top:290px;width:30.4px;height:30px;border:1px solid #000"></div><svg style="left:1842.7px;top:290px" width="30" height="30" viewBox="0 0 30 30"><circle cx="7.5" cy="22" r="3.6" fill="none" stroke="#0000ff" stroke-width="1.8"/><circle cx="22.5" cy="7" r="4.6" fill="#ff0000"/><path d="M12 18 L17.5 12.5 M17.5 12.5 H14.6 M17.5 12.5 V15.4" stroke="#000" stroke-width="1" fill="none"/></svg>
<div style="left:1878.5px;top:286px;width:38.4px;height:38px;background:#d3d3d3;border:3px solid;border-color:#f8f8f8 #7e7e7e #7e7e7e #f8f8f8"></div><div style="left:1882.5px;top:290px;width:30.4px;height:30px;border:1px solid #000"></div><svg style="left:1882.7px;top:290px" width="30" height="30" viewBox="0 0 30 30"><circle cx="7.5" cy="22" r="4.6" fill="#0000ff"/><circle cx="22.5" cy="7" r="4.6" fill="#ff0000"/><path d="M12 18 L17.5 12.5 M17.5 12.5 H14.6 M17.5 12.5 V15.4" stroke="#000" stroke-width="1" fill="none"/></svg>
<div style="left:1758.5px;top:326px;width:38.4px;height:38px;background:#d3d3d3;border:3px solid;border-color:#f8f8f8 #7e7e7e #7e7e7e #f8f8f8"></div><div style="left:1762.5px;top:330px;width:30.4px;height:30px;border:1px solid #000"></div><svg style="left:1762.7px;top:330px" width="30" height="30" viewBox="0 0 30 30"><path d="M5 22 L22.5 5.5" stroke="#e01010" stroke-width="2.6" stroke-linecap="round"/><path d="M6.5 24.5 H24" stroke="#0000ff" stroke-width="2.6" stroke-linecap="round"/><path d="M22 20 L18.5 16.5 M18.5 16.5 H21 M18.5 16.5 V19" stroke="#000" stroke-width="0.9" fill="none"/></svg>
<div style="left:1798.5px;top:326px;width:38.4px;height:38px;background:#d3d3d3;border:3px solid;border-color:#f8f8f8 #7e7e7e #7e7e7e #f8f8f8"></div><div style="left:1802.5px;top:330px;width:30.4px;height:30px;border:1px solid #000"></div><svg style="left:1802.7px;top:330px" width="30" height="30" viewBox="0 0 30 30"><path d="M14.5 13.5 L22.5 5.5" stroke="#e01010" stroke-width="2.8" stroke-linecap="round"/><path d="M5 22.5 L14.5 13.5" stroke="#0000ff" stroke-width="2.8" stroke-linecap="round"/><path d="M16 21.5 L19.5 18 M19.5 18 H17 M19.5 18 V20.5" stroke="#000" stroke-width="0.9" fill="none"/></svg>
<div style="left:1838.5px;top:326px;width:38.4px;height:38px;background:#d3d3d3;border:3px solid;border-color:#f8f8f8 #7e7e7e #7e7e7e #f8f8f8"></div><div style="left:1842.5px;top:330px;width:30.4px;height:30px;border:1px solid #000"></div><svg style="left:1842.7px;top:330px" width="30" height="30" viewBox="0 0 30 30"><path d="M14 7.5 Q21 7.5 21 14 Q21 20.5 13 20.5" fill="none" stroke="#000" stroke-width="1.6"/><polygon points="9.5,20.5 14,17.5 14,23.5" fill="#000"/></svg>
<div style="left:1878.5px;top:326px;width:38.4px;height:38px;background:#d3d3d3;border:3px solid;border-color:#f8f8f8 #7e7e7e #7e7e7e #f8f8f8"></div><div style="left:1882.5px;top:330px;width:30.4px;height:30px;border:1px solid #000"></div><svg style="left:1882.7px;top:330px" width="30" height="30" viewBox="0 0 30 30"><path d="M3 7.5 H12.5 V23 M4 14.5 H12.5" stroke="#0000ff" stroke-width="2.4" fill="none"/><path d="M15.2 3.5 V26.5" stroke="#000" stroke-width="0.9"/><path d="M27.5 7.5 H18.5 V23 M18.5 14.5 H26" stroke="#e01010" stroke-width="2.4" fill="none"/></svg>
<div style="left:1758.5px;top:366px;width:38.4px;height:38px;background:#d3d3d3;border:3px solid;border-color:#f8f8f8 #7e7e7e #7e7e7e #f8f8f8"></div><div style="left:1762.5px;top:370px;width:30.4px;height:30px;border:1px solid #000"></div><svg style="left:1762.7px;top:370px" width="30" height="30" viewBox="0 0 30 30"><rect x="17.5" y="2.5" width="9.5" height="9.5" fill="#e01010"/><circle cx="22.3" cy="7.3" r="2.8" fill="#d3d3d3"/><rect x="2" y="17" width="9.5" height="9.5" fill="none" stroke="#0000ff" stroke-width="1.2"/><circle cx="6.8" cy="21.8" r="2.9" fill="#0000ff"/><path d="M12.5 16.5 L16 13 M16 13 H13.6 M16 13 V15.4" stroke="#000" stroke-width="0.9" fill="none"/></svg>
<div style="left:1798.5px;top:366px;width:38.4px;height:38px;background:#d3d3d3;border:3px solid;border-color:#f8f8f8 #7e7e7e #7e7e7e #f8f8f8"></div><div style="left:1802.5px;top:370px;width:30.4px;height:30px;border:1px solid #000"></div><svg style="left:1802.7px;top:370px" width="30" height="30" viewBox="0 0 30 30"><path d="M5 14.5 H25" stroke="#e01010" stroke-width="2.6" stroke-linecap="round"/><path d="M12.5 14.5 H18" stroke="#0000ff" stroke-width="2.6"/></svg>
<div style="left:1838.5px;top:366px;width:38.4px;height:38px;background:#d3d3d3;border:3px solid;border-color:#f8f8f8 #7e7e7e #7e7e7e #f8f8f8"></div><div style="left:1842.5px;top:370px;width:30.4px;height:30px;border:1px solid #000"></div><svg style="left:1842.7px;top:370px" width="30" height="30" viewBox="0 0 30 30"><path d="M4.5 4 V26 M25.5 4 V26" stroke="#000" stroke-width="1.2"/><path d="M6 15 H11 M19 15 H24 M8 13 L6 15 L8 17 M22 13 L24 15 L22 17" stroke="#0000ff" stroke-width="0.9" fill="none"/><rect x="11.5" y="10.5" width="7" height="9" fill="none" stroke="#0000ff" stroke-width="1"/><path d="M16 12 L13.5 16 H17 M16 12 V18.5" stroke="#0000ff" stroke-width="0.9" fill="none"/></svg>
<div style="left:1878.5px;top:366px;width:38.4px;height:38px;background:#d3d3d3;border:3px solid;border-color:#f8f8f8 #7e7e7e #7e7e7e #f8f8f8"></div><div style="left:1882.5px;top:370px;width:30.4px;height:30px;border:1px solid #000"></div><svg style="left:1882.7px;top:370px" width="30" height="30" viewBox="0 0 30 30"><path d="M4 6.5 H18 V12 H26 V25.5 H13 V21 H4 Z" fill="#0000ff"/><circle cx="9.5" cy="11.5" r="3.4" fill="#d3d3d3"/><circle cx="18.5" cy="19.5" r="4" fill="#d3d3d3"/></svg>
<div style="left:1758.5px;top:406px;width:38.4px;height:38px;background:#d3d3d3;border:3px solid;border-color:#f8f8f8 #7e7e7e #7e7e7e #f8f8f8"></div><div style="left:1762.5px;top:410px;width:30.4px;height:30px;border:1px solid #000"></div><svg style="left:1762.7px;top:410px" width="30" height="30" viewBox="0 0 30 30"><path d="M5 23 L17 9 L25 23" fill="none" stroke="#e01010" stroke-width="2.2"/><path d="M4.5 23.5 H25.5" stroke="#0000ff" stroke-width="2.6"/><path d="M16 21 V15.5 M14 17.5 L16 15.5 L18 17.5" stroke="#000" stroke-width="1" fill="none"/></svg>
<div style="left:1798.5px;top:406px;width:38.4px;height:38px;background:#d3d3d3;border:3px solid;border-color:#f8f8f8 #7e7e7e #7e7e7e #f8f8f8"></div><div style="left:1802.5px;top:410px;width:30.4px;height:30px;border:1px solid #000"></div><svg style="left:1802.7px;top:410px" width="30" height="30" viewBox="0 0 30 30"><path d="M3 29 L13.5 2 L26.5 29 M6.5 29 L13.5 9 L23 29" fill="none" stroke="#e01010" stroke-width="1.2"/><path d="M6 29 L14 19.5 L24.5 29" fill="none" stroke="#0000ff" stroke-width="2.4"/><path d="M14 16.5 V10.5 M12 12.8 L14 10.5 L16 12.8" stroke="#000" stroke-width="1.1" fill="none"/></svg>
<div style="left:1838.5px;top:406px;width:38.4px;height:38px;background:#d3d3d3;border:3px solid;border-color:#f8f8f8 #7e7e7e #7e7e7e #f8f8f8"></div><div style="left:1842.5px;top:410px;width:30.4px;height:30px;border:1px solid #000"></div><svg style="left:1842.7px;top:410px" width="30" height="30" viewBox="0 0 30 30"><path d="M6 19 L11 6 H19.5 L24.5 19" fill="none" stroke="#e01010" stroke-width="2.6"/><path d="M2 29 L5 20 H25.5 L28.5 29" fill="none" stroke="#0000ff" stroke-width="2.6"/><path d="M15 17 V10.5 M13 12.8 L15 10.5 L17 12.8" stroke="#000" stroke-width="1.1" fill="none"/></svg>
<div style="left:1878.5px;top:406px;width:38.4px;height:38px;background:#d3d3d3;border:3px solid;border-color:#f8f8f8 #7e7e7e #7e7e7e #f8f8f8"></div><div style="left:1882.5px;top:410px;width:30.4px;height:30px;border:1px solid #000"></div><svg style="left:1882.7px;top:410px" width="30" height="30" viewBox="0 0 30 30"><path d="M6 19 L11 6 H19.5 L24.5 19" fill="none" stroke="#e01010" stroke-width="2.6"/><path d="M0.5 20.5 H29.5" stroke="#0000ff" stroke-width="2.6"/><path d="M2.5 17.5 L8 23.5 M8 17.5 L2.5 23.5 M22 17.5 L27.5 23.5 M27.5 17.5 L22 23.5" stroke="#000" stroke-width="0.8"/><path d="M15 17 V10.5 M13 12.8 L15 10.5 L17 12.8" stroke="#000" stroke-width="1.1" fill="none"/></svg>
<div style="left:1758.5px;top:446px;width:38.4px;height:38px;background:#ffc14d;border:3px solid;border-color:#ffe6a8 #a87c28 #a87c28 #ffe6a8"></div><div style="left:1762.5px;top:450px;width:30.4px;height:30px;border:1px solid #000"></div><svg style="left:1762.7px;top:450px" width="30" height="30" viewBox="0 0 30 30"><polygon points="10.5,6.0 10.5,18.6 13.5,15.9 16.5,22.1 19.0,20.9 16.0,15.0 20.2,15.0" fill="#000"/></svg>
<div style="left:1798.5px;top:446px;width:38.4px;height:38px;background:#ffc14d;border:3px solid;border-color:#ffe6a8 #a87c28 #a87c28 #ffe6a8"></div><div style="left:1802.5px;top:450px;width:30.4px;height:30px;border:1px solid #000"></div><svg style="left:1802.7px;top:450px" width="30" height="30" viewBox="0 0 30 30"><rect x="4.5" y="3.5" width="20" height="21" fill="none" stroke="#e01010" stroke-width="1.8"/><polygon points="10.5,6.0 10.5,18.6 13.5,15.9 16.5,22.1 19.0,20.9 16.0,15.0 20.2,15.0" fill="#000"/></svg>
<div style="left:1838.5px;top:446px;width:38.4px;height:38px;background:#ffc14d;border:3px solid;border-color:#ffe6a8 #a87c28 #a87c28 #ffe6a8"></div><div style="left:1842.5px;top:450px;width:30.4px;height:30px;border:1px solid #000"></div><svg style="left:1842.7px;top:450px" width="30" height="30" viewBox="0 0 30 30"><path d="M10 3.5 H24.5 V24.5 H10 L4.5 19 V8.5 Z" fill="none" stroke="#e01010" stroke-width="1.8"/><polygon points="10.5,6.0 10.5,18.6 13.5,15.9 16.5,22.1 19.0,20.9 16.0,15.0 20.2,15.0" fill="#000"/></svg>
<div style="left:1878.5px;top:446px;width:38.4px;height:38px;background:#ffc14d;border:3px solid;border-color:#ffe6a8 #a87c28 #a87c28 #ffe6a8"></div><div style="left:1882.5px;top:450px;width:30.4px;height:30px;border:1px solid #000"></div><svg style="left:1882.7px;top:450px" width="30" height="30" viewBox="0 0 30 30"><path d="M6 0 V15 M6 24 H12.5 V15 H15.5 V7 H22" fill="none" stroke="#000" stroke-width="0.9"/><circle cx="6" cy="16" r="2.4" fill="#e01010" stroke="#000" stroke-width=".5"/><circle cx="5.5" cy="24" r="2.5" fill="#20e020" stroke="#000" stroke-width=".5"/><circle cx="23" cy="7" r="2.5" fill="#20e020" stroke="#000" stroke-width=".5"/><polygon points="19.0,12.0 19.0,24.1 21.9,21.5 24.7,27.4 27.1,26.3 24.3,20.6 28.2,20.6" fill="#000"/></svg>
<div style="left:1757px;top:241px;width:162px;height:2px;background:#c9eeee"></div>
<div style="left:1757px;top:485.5px;width:162px;height:2.5px;background:#5a8a80"></div>
<div style="left:1758px;top:629px;width:161px;height:160.5px;border:1px solid #3b6b2b;border-right:none"></div>
<div style="left:1764px;top:635.5px;width:147.5px;height:146.5px;border:2px solid #fff;border-radius:3px"></div>
<div style="left:1882px;top:652.5px;width:6px;height:3px;background:#ff1010"></div>
<svg style="left:1761px;top:778px" width="9" height="9" viewBox="0 0 9 9"><path d="M1 1 L8 8 M8 1 L1 8" stroke="#fff" stroke-width="1"/></svg>
<div class="rt" style="left:1757px;top:929px;width:162px;height:45px"></div>
<div class="m15" style="left:1761px;top:936.5px;">X = 7.167324"</div>
<div class="m15" style="left:1761px;top:951.5px;">Y = 7.543432"</div>
<div style="left:1740px;top:801px;width:179px;height:26px;background:#fbfbfd;border-radius:4px 0 0 4px"></div>
<svg style="left:1717px;top:794px" width="202" height="38" viewBox="1717 794 202 38"><g transform="rotate(-8 1735 813)"><rect x="1721" y="799" width="28" height="27" rx="6" fill="#f0582a"/><path d="M1742.5 806.5 Q1735 802.5 1729 806 Q1725.5 809.5 1731 812 L1739 814.5 Q1744 817 1740 820 Q1734 823 1727 819.5" fill="none" stroke="#fff" stroke-width="3.2" stroke-linecap="round"/></g><g fill="#1e6fdc"><path d="M1756 808.5 H1769 M1759.5 805.5 V811 M1765.5 805.5 V811 M1757 815 H1768 M1762.5 811 V815 M1762.5 815 L1757 821.5 M1762.5 815 L1768.5 821.5 M1758 811.5 H1767 V815" stroke="#1e6fdc" stroke-width="1.5" fill="none"/><circle cx="1784.5" cy="812" r="1.6"/><path d="M1790.5 813 q1.8 0 1.8 1.8 q0 2.4 -2.6 3.6 q1.2 -1.4 0.8 -2.4 q-1.4 -0.4 -1.4 -1.6 q0 -1.4 1.4 -1.4z"/><rect x="1807.5" y="805" width="6" height="11" rx="3"/><path d="M1804.5 813 q0 6 6 6 q6 0 6 -6 M1810.5 819 v3" stroke="#1e6fdc" stroke-width="1.6" fill="none"/><rect x="1827" y="807.5" width="17" height="11.5" rx="2"/></g><g fill="#fff"><rect x="1829.5" y="810" width="2" height="1.6"/><rect x="1832.8" y="810" width="2" height="1.6"/><rect x="1836.1" y="810" width="2" height="1.6"/><rect x="1839.4" y="810" width="2" height="1.6"/><rect x="1829.5" y="813" width="2" height="1.6"/><rect x="1832.8" y="813" width="2" height="1.6"/><rect x="1836.1" y="813" width="2" height="1.6"/><rect x="1839.4" y="813" width="2" height="1.6"/><rect x="1831.5" y="816" width="8" height="1.4"/></g><path d="M1851 809 L1855.5 806.5 Q1859 809.5 1862.5 806.5 L1867 809 L1865 813 L1863.5 812.3 V821.5 H1854.5 V812.3 L1853 813 Z" fill="#ff5a1f"/><path d="M1855.5 806.5 Q1859 809.5 1862.5 806.5 L1863.5 809 Q1859 812 1854.5 809 Z" fill="#ff3c8c"/><g fill="#1e6fdc"><rect x="1877" y="806.5" width="6.3" height="6.3" rx="1.8"/><circle cx="1888.7" cy="809.6" r="3.3"/><rect x="1877" y="814.5" width="6.3" height="6.3" rx="1.8"/><rect x="1885.5" y="814.5" width="6.3" height="6.3" rx="1.8"/></g><circle cx="1907.5" cy="814" r="10.5" fill="#f3efe8" stroke="#ddd" stroke-width="0.6"/><path d="M1900.5 811 Q1905 805.5 1913.5 808.5 L1912 813.5 Q1906 811.5 1901.5 815 Z" fill="#f08a24"/><circle cx="1904.5" cy="812.5" r="1.1" fill="#222"/><circle cx="1910" cy="812" r="1.1" fill="#222"/><path d="M1914 805 l1.2 2.2 2.3 .5 -1.8 1.5 .4 2.4 -2.1-1.2" fill="#ffd21f"/></svg>
<div style="left:600px;top:183px;width:8px;height:626px;background:#000"></div>
<div style="left:155px;top:801px;width:453px;height:8.5px;background:#000"></div>
<div style="left:550px;top:802.5px;width:1px;height:7px;background:#fff"></div>
<div style="left:588px;top:789px;width:12px;height:12px;background:#000"></div>
<div style="left:105px;top:183px;width:495px;height:618px;background:#56cdb1;border-radius:8px 8px 8px 8px;overflow:hidden">
<div style="left:0;top:0;width:495px;height:30px;background:#f3f3f3"></div>
<div style="left:0;top:30px;width:495px;height:1.2px;background:#000"></div>
</div>
<svg style="left:113.5px;top:190.5px" width="15.5" height="14.5" viewBox="0 0 16 15"><rect x="0" y="0" width="16" height="15" fill="#111"/><rect x="1" y="1" width="13.5" height="12.5" fill="#ffffe8"/><rect x="1" y="1" width="13.5" height="2.6" fill="#14148c"/><rect x="10" y="1.4" width="1.3" height="1.3" fill="#fff"/><rect x="12.2" y="1.4" width="1.3" height="1.3" fill="#fff"/><path d="M3.5 5.5 L11 11.5 M10.5 5 L3.8 12" stroke="#111" stroke-width="1.5" fill="none"/><path d="M4 6.5 L10 11 M9.8 5.8 L4.3 11.4" stroke="#e8e800" stroke-width="1" fill="none"/></svg>
<div class="sans" style="left:134.5px;top:190px;font-size:11.4px;line-height:15px;color:#8a8a8a">Results viewer</div>
<svg style="left:578px;top:190px" width="14" height="14" viewBox="0 0 14 14"><path d="M2 2 L12 12 M12 2 L2 12" stroke="#666" stroke-width="1"/></svg>
<div style="left:105px;top:214px;width:2px;height:586px;background:#4a9a86"></div>
<div class="rt" style="left:107px;top:214.5px;width:491px;height:24.5px"></div>
<div class="ser" style="left:107px;top:217px;width:491px;text-align:center;font-size:15.4px;line-height:19px;font-weight:normal;text-shadow:0.3px 0 0 #000">Signal Layer Checks</div>
<div style="left:105px;top:240.5px;width:495px;height:2.5px;background:#000"></div>
<div style="left:105px;top:243px;width:495px;height:29.5px;background:#000"></div>
<div style="left:106.5px;top:243.5px;width:49.5px;height:28px;background:#56cdb1"></div>
<div class="rc" style="left:108.5px;top:246px;width:45.5px;height:23px;"></div><div class="m15" style="font-weight:normal;left:113.25px;top:251.5px;font-style:italic;">None</div>
<div style="left:157px;top:243.5px;width:76px;height:28px;background:#9fdada"></div>
<div class="m15" style="left:168px;top:251.2px;font-style:italic">Layers</div>
<div style="left:234.5px;top:243.5px;width:40px;height:28px;background:#56cdb1"></div>
<div class="rc" style="left:236.5px;top:246px;width:36px;height:23px;"></div><div class="m15" style="font-weight:normal;left:241.0px;top:251.5px;font-style:italic;">All</div>
<div style="left:277.5px;top:243.5px;width:321px;height:28px;background:#9fdada"></div>
<div class="rc" style="left:279.5px;top:245.5px;width:203.5px;height:25px;"></div><div class="m15" style="left:313.75px;top:252px;font-style:italic;">Categories (17)</div>
<div class="m15" style="left:486px;top:252.5px">Meas:</div>
<div style="left:536.5px;top:243.5px;width:62px;height:28px;background:#56cdb1"></div>
<div class="rc" style="left:538.5px;top:246px;width:58px;height:23px;"></div><div class="m15" style="left:544px;top:252.5px;">All</div>
<div class="rc" style="left:579.5px;top:254.5px;width:11px;height:7px;border-width:1.5px"></div>
<div class="st" style="left:106.5px;top:272.5px;width:151px;height:400px;border-width:1.5px"></div>
<div style="left:110.5px;top:277px;width:141px;height:15.5px;background:#000"></div>
<div class="m15" style="left:111px;top:277.7px;color:#56cdb1">sig6t</div>
<div class="st" style="left:260.5px;top:272.5px;width:14px;height:400px;border-width:1.5px;background:#4cb49c"></div>
<svg style="left:261px;top:273.5px" width="13" height="13" viewBox="0 0 13 13"><path d="M6.5 1 L12 11.5 H1 Z" fill="#56cdb1"/><path d="M6.5 1 L12 11.5 H1" fill="none" stroke="#37806e" stroke-width="1.2"/><path d="M6.5 1 L1 11.5" fill="none" stroke="#b4f0e2" stroke-width="1.2"/></svg>
<svg style="left:261px;top:658px" width="13" height="13" viewBox="0 0 13 13"><path d="M6.5 12 L12 1.5 H1 Z" fill="#56cdb1"/><path d="M6.5 12 L12 1.5" fill="none" stroke="#37806e" stroke-width="1.2"/><path d="M12 1.5 H1 L6.5 12" fill="none" stroke="#b4f0e2" stroke-width="1.2"/></svg>
<div class="rt" style="left:262px;top:287px;width:11px;height:370px;border-width:1.5px"></div>
<div class="st" style="left:106.5px;top:678px;width:151px;height:13px;border-width:1.5px;background:#4cb49c"></div>
<svg style="left:107.5px;top:678px" width="13" height="13" viewBox="0 0 13 13"><path d="M1 6.5 L11.5 1 V12 Z" fill="#56cdb1"/><path d="M1 6.5 L11.5 12 V1" fill="none" stroke="#37806e" stroke-width="1.2"/><path d="M11.5 1 L1 6.5" fill="none" stroke="#b4f0e2" stroke-width="1.2"/></svg>
<svg style="left:243.5px;top:678px" width="13" height="13" viewBox="0 0 13 13"><path d="M12 6.5 L1.5 1 V12 Z" fill="#56cdb1"/><path d="M12 6.5 L1.5 12" fill="none" stroke="#37806e" stroke-width="1.2"/><path d="M1.5 12 V1 L12 6.5" fill="none" stroke="#b4f0e2" stroke-width="1.2"/></svg>
<div class="rt" style="left:121px;top:679.5px;width:121px;height:10px;border-width:1.5px"></div>
<div style="left:274.5px;top:243px;width:3px;height:481px;background:#000"></div>
<div class="st" style="left:278px;top:272.5px;width:305px;height:339px;border-width:1.5px"></div>
<div class="m15" style="left:282px;top:279.7px">Via to Via (115)</div>
<div class="m15" style="left:282px;top:297.7px">Pad to circuit (3413)</div>
<div class="m15" style="left:282px;top:315.7px">Circuit to circuit (8296)</div>
<div class="m15" style="left:282px;top:333.7px">NPTH to circuit (80)</div>
<div style="left:281.5px;top:352.2px;width:294px;height:0"></div>
<div style="left:281.5px;top:352.9px;width:294px;height:14.6px;background:#000"></div>
<div class="m15" style="left:282px;top:351.7px;color:#56cdb1">PTH to Copper (4074)</div>
<div class="m15" style="left:282px;top:369.7px">VIA Annular ring (5089)</div>
<div class="m15" style="left:282px;top:387.7px">PTH Registration (75)</div>
<div class="m15" style="left:282px;top:405.7px">Missing Pad for VIA (567)</div>
<div class="m15" style="left:282px;top:423.7px">Spacing length (522)</div>
<div class="m15" style="left:282px;top:441.7px">Rout to Copper (78)</div>
<div class="m15" style="left:282px;top:459.7px">Pads (15269)</div>
<div class="m15" style="left:282px;top:477.7px">Lines (14)</div>
<div class="m15" style="left:282px;top:495.7px">Line Neckdown (12)</div>
<div class="m15" style="left:282px;top:513.7px">Local Spacing (233)</div>
<div class="m15" style="left:282px;top:531.7px">Conductor width (220)</div>
<div class="m15" style="left:282px;top:549.7px">Pad to Cu Connection (2)</div>
<div class="m15" style="left:282px;top:567.7px">Feature too small to check (407)</div>
<div class="st" style="left:585px;top:272.5px;width:14px;height:339px;border-width:1.5px;background:#4cb49c"></div>
<svg style="left:585.5px;top:274px" width="13" height="13" viewBox="0 0 13 13"><path d="M6.5 1 L12 11.5 H1 Z" fill="#56cdb1"/><path d="M6.5 1 L12 11.5 H1" fill="none" stroke="#37806e" stroke-width="1.2"/><path d="M6.5 1 L1 11.5" fill="none" stroke="#b4f0e2" stroke-width="1.2"/></svg>
<svg style="left:585.5px;top:597px" width="13" height="13" viewBox="0 0 13 13"><path d="M6.5 12 L12 1.5 H1 Z" fill="#56cdb1"/><path d="M6.5 12 L12 1.5" fill="none" stroke="#37806e" stroke-width="1.2"/><path d="M12 1.5 H1 L6.5 12" fill="none" stroke="#b4f0e2" stroke-width="1.2"/></svg>
<div class="rt" style="left:586.5px;top:288px;width:11px;height:308px;border-width:1.5px"></div>
<div class="st" style="left:278px;top:617px;width:302px;height:13px;border-width:1.5px;background:#4cb49c"></div>
<svg style="left:279px;top:617px" width="13" height="13" viewBox="0 0 13 13"><path d="M1 6.5 L11.5 1 V12 Z" fill="#56cdb1"/><path d="M1 6.5 L11.5 12 V1" fill="none" stroke="#37806e" stroke-width="1.2"/><path d="M11.5 1 L1 6.5" fill="none" stroke="#b4f0e2" stroke-width="1.2"/></svg>
<svg style="left:566px;top:617px" width="13" height="13" viewBox="0 0 13 13"><path d="M12 6.5 L1.5 1 V12 Z" fill="#56cdb1"/><path d="M12 6.5 L1.5 12" fill="none" stroke="#37806e" stroke-width="1.2"/><path d="M1.5 12 V1 L12 6.5" fill="none" stroke="#b4f0e2" stroke-width="1.2"/></svg>
<div class="rt" style="left:292.5px;top:618.5px;width:273px;height:10px;border-width:1.5px"></div>
<div class="rc" style="left:279.5px;top:634.5px;width:51px;height:21px;"></div><div class="m15" style="left:282.5px;top:637.5px;">First</div>
<div class="rc" style="left:337px;top:634.5px;width:42.5px;height:21px;"></div><div class="m15" style="left:340.25px;top:637.5px;">&lt;---</div>
<div class="rc" style="left:384.5px;top:634.5px;width:42.5px;height:21px;"></div><div class="m15" style="left:387.75px;top:637.5px;">---&gt;</div>
<div class="rc" style="left:432px;top:634.5px;width:44px;height:21px;"></div><div class="m15" style="left:436.0px;top:637.5px;">Last</div>
<div class="m15" style="left:481px;top:637.7px">Index:</div>
<div class="sc" style="left:538.5px;top:633px;width:58px;height:22.5px;background:#56cdb1;border-width:1.5px"></div>
<div class="m15" style="left:545px;top:634.5px;font-weight:normal;-webkit-text-stroke:0.35px #000;letter-spacing:0.2px">13136</div>
<svg style="left:541px;top:636px" width="6" height="17" viewBox="0 0 6 17"><path d="M1 1 H5 M3 1 V16 M1 16 H5" stroke="#000" stroke-width="1" fill="none"/></svg>
<div style="left:277.5px;top:658.5px;width:220px;height:32.5px;background:#000"></div>
<div style="left:279.5px;top:660px;width:120.5px;height:29.5px;background:#56cdb1"></div>
<div class="rc" style="left:283px;top:662px;width:115px;height:26px;"></div><div class="m15" style="left:289.5px;top:667.5px;">Auto Zoom</div>
<div class="rc" style="left:379px;top:671.5px;width:12px;height:7.5px;border-width:1.5px"></div>
<div style="left:402px;top:660px;width:27px;height:29.5px;background:#9fdada"></div>
<div class="m15" style="left:403px;top:668px">Sv:</div>
<div style="left:429.5px;top:660px;width:67px;height:29.5px;background:#22dd22"></div>
<div style="left:433.5px;top:663px;width:59.5px;height:23.5px;background:#22dd22;border:2px solid;border-color:#8cf58c #108810 #108810 #8cf58c"></div>
<div style="left:475.5px;top:671.5px;width:12px;height:7.5px;background:#22dd22;border:1.5px solid;border-color:#b4ffb4 #108810 #108810 #b4ffb4"></div>
<div class="rt" style="left:503px;top:665.5px;width:12px;height:12px;border-width:1.5px"></div>
<div class="m15" style="left:518px;top:665px">Show All</div>
<div class="st" style="left:107px;top:693.5px;width:168px;height:31px;border-width:1px;background:#56cdb1"></div>
<div class="rc" style="left:113px;top:697.5px;width:160px;height:24px;"></div><div class="m15" style="left:118.5px;top:702.0px;">Replace layers</div>
<div class="rc" style="left:253.5px;top:706px;width:12px;height:7.5px;border-width:1.5px"></div>
<div class="rc" style="left:495.2px;top:693.2px;width:29.4px;height:29.4px"></div><div style="left:498.7px;top:696.7px;width:22.4px;height:22.4px;border:1px solid #000"></div><svg style="left:498.7px;top:696.7px" width="22.4" height="22.4" viewBox="0 0 22.4 22.4"><text x="1.2" y="10.2" font-family="Liberation Serif" font-size="11.5" fill="#000" textLength="20.0" lengthAdjust="spacingAndGlyphs">DEL</text><path d="M0.5 10.8 H21.9" stroke="#000" stroke-width="0.8"/><circle cx="11.2" cy="16.5" r="3.4" fill="#ff2020" stroke="#300" stroke-width="0.5"/></svg>
<div class="rc" style="left:529.4px;top:693.2px;width:29.4px;height:29.4px"></div><div style="left:532.9px;top:696.7px;width:22.4px;height:22.4px;border:1px solid #000"></div><svg style="left:532.9px;top:696.7px" width="22.4" height="22.4" viewBox="0 0 22.4 22.4"><text x="1.2" y="10.2" font-family="Liberation Serif" font-size="11.5" fill="#000" textLength="20.0" lengthAdjust="spacingAndGlyphs">REF</text><path d="M0.5 10.8 H21.9" stroke="#000" stroke-width="0.8"/><circle cx="11.2" cy="16.5" r="3.4" fill="#20e020" stroke="#300" stroke-width="0.5"/></svg>
<div class="rc" style="left:563.4px;top:693.2px;width:33.5px;height:29.4px"></div><div style="left:566.9px;top:696.7px;width:26.5px;height:22.4px;border:1px solid #000"></div><svg style="left:566.9px;top:696.7px" width="26.5" height="22.4" viewBox="0 0 26.5 22.4"><text x="1.2" y="10.2" font-family="Liberation Serif" font-size="11.5" fill="#000" textLength="24.1" lengthAdjust="spacingAndGlyphs">UNDO</text><path d="M0.5 10.8 H26.0" stroke="#000" stroke-width="0.8"/></svg>
<svg style="left:574px;top:708px" width="13" height="10.5" viewBox="0 0 14 11"><path d="M3 4.5 H8 Q11 4.5 11 7 Q11 9.5 8 9.5 H6" fill="none" stroke="#000" stroke-width="2.4"/><path d="M3 4.5 H8 Q11 4.5 11 7 Q11 9.5 8 9.5 H6" fill="none" stroke="#ffd21f" stroke-width="1.2"/><polygon points="0.5,4.5 4.5,1 4.5,8" fill="#ffd21f" stroke="#000" stroke-width=".6"/></svg>
<div style="left:105px;top:724px;width:495px;height:2.5px;background:#000"></div>
<div style="left:107px;top:726.5px;width:491px;height:20.5px;background:#56cdb1"></div>
<div class="m15" style="left:222px;top:729.5px">sig6t 4.42mil  r9.843  r8.874</div>
<div style="left:107px;top:747.5px;width:491px;height:20.5px;background:#ffffd2;border:1px solid #000;border-width:1px 0 1px 0"></div>
<div class="m15" style="left:108px;top:751.2px">ERF--&gt; pth2c = 10.984 12.008 14.016</div>
<div class="rc" style="left:107.5px;top:770.5px;width:285.5px;height:29px;"></div><div class="m15" style="left:227.75px;top:777.5px;">Close</div>
<div class="rc" style="left:398.2px;top:770.8px;width:29.4px;height:28.8px"></div>
<div style="left:401.8px;top:774.4px;width:22.3px;height:21.2px;border:1px solid #000"></div>
<svg style="left:402.8px;top:775.4px" width="20.3" height="19.2" viewBox="0 0 19 19" preserveAspectRatio="none"><rect x="0" y="0" width="19" height="19" fill="#000"/><rect x="11" y="0" width="8" height="13" fill="#ffe81f"/><rect x="8" y="2" width="3" height="7" fill="#9fdada"/><rect x="3" y="0" width="5" height="5" fill="#9fdada"/><rect x="0" y="0" width="8" height="10" fill="#9fdada"/><rect x="6" y="4" width="5" height="6" fill="#000"/><rect x="14" y="3" width="2" height="2" fill="#000"/></svg>
<div class="rc" style="left:432.25px;top:770.8px;width:29.4px;height:28.8px"></div>
<div style="left:435.85px;top:774.4px;width:22.3px;height:21.2px;border:1px solid #000"></div>
<svg style="left:436.85px;top:775.4px" width="20.3" height="19.2" viewBox="0 0 19 19" preserveAspectRatio="none"><rect x="0.5" y="0.5" width="18" height="18" fill="#000"/><rect x="2" y="15" width="15" height="2" fill="#9fdada"/><circle cx="7" cy="9" r="3.2" fill="#ff2020"/><path d="M9 9 H14 M13.5 4 V13" stroke="#ff2020" stroke-width="1.6"/></svg>
<div class="rc" style="left:466.29999999999995px;top:770.8px;width:29.4px;height:28.8px"></div>
<div style="left:469.9px;top:774.4px;width:22.3px;height:21.2px;border:1px solid #000"></div>
<svg style="left:470.9px;top:775.4px" width="20.3" height="19.2" viewBox="0 0 19 19" preserveAspectRatio="none"><text x="9.5" y="14" font-family="Liberation Serif" font-size="11" text-anchor="middle" fill="#000" textLength="17">REF</text><path d="M1 2 L18 17 M18 2 L1 17" stroke="#ff2020" stroke-width="1.6"/></svg>
<div class="rc" style="left:500.34999999999997px;top:770.8px;width:29.4px;height:28.8px"></div>
<div style="left:503.95px;top:774.4px;width:22.3px;height:21.2px;border:1px solid #000"></div>
<svg style="left:504.95px;top:775.4px" width="20.3" height="19.2" viewBox="0 0 19 19" preserveAspectRatio="none"><path d="M1 1 H18 V13 L13 18 H1 Z" fill="#22dd22" stroke="#000" stroke-width="1"/><text x="9" y="12.5" font-family="Liberation Sans" font-weight="bold" font-size="11" text-anchor="middle" fill="#000">12</text></svg>
<div class="rc" style="left:534.4px;top:770.8px;width:29.4px;height:28.8px"></div>
<div style="left:538.0px;top:774.4px;width:22.3px;height:21.2px;border:1px solid #000"></div>
<svg style="left:539.0px;top:775.4px" width="20.3" height="19.2" viewBox="0 0 19 19" preserveAspectRatio="none"><path d="M1 1 H18 V13 L13 18 H1 Z" fill="#ffe81f" stroke="#000" stroke-width="1"/><path d="M4 4.5 H15 M4 7.5 H15 M4 10.5 H15 M4 13.5 H11" stroke="#000" stroke-width="1"/></svg>
<div class="rc" style="left:568.45px;top:770.8px;width:29.4px;height:28.8px"></div>
<div style="left:570.45px;top:772.8px;width:25.4px;height:24.8px;background:#e01818"></div>
<svg style="left:573.0500000000001px;top:775.4px" width="20.3" height="19.2" viewBox="0 0 19 19" preserveAspectRatio="none"><rect x="0" y="0" width="19" height="19" fill="#9fdada"/><path d="M3.5 17 V9 M7 17 V3 M10.5 17 V7 M14 17 V4 M17 17 V10" stroke-width="2.4" stroke="#ff2020"/><path d="M7 17 V3" stroke="#20a020" stroke-width="2.4"/><path d="M10.5 17 V7" stroke="#2020ff" stroke-width="2.4"/><path d="M14 17 V4" stroke="#c020c0" stroke-width="2.4"/><path d="M1 17.5 H19" stroke="#000" stroke-width="1"/></svg>
<div style="left:1245.3px;top:361px;width:8px;height:569.5px;background:#000"></div>
<div style="left:1253px;top:361px;width:467px;height:568.5px;background:#56cdb1;border-radius:8px 8px 5px 5px;overflow:hidden">
<div style="left:0;top:0;width:467px;height:30px;background:#f3f3f3"></div>
<div style="left:0;top:30px;width:467px;height:1.2px;background:#000"></div>
</div>
<svg style="left:1261.5px;top:368.5px" width="15.5" height="14.5" viewBox="0 0 16 15"><rect x="0" y="0" width="16" height="15" fill="#111"/><rect x="1" y="1" width="13.5" height="12.5" fill="#ffffe8"/><rect x="1" y="1" width="13.5" height="2.6" fill="#14148c"/><rect x="10" y="1.4" width="1.3" height="1.3" fill="#fff"/><rect x="12.2" y="1.4" width="1.3" height="1.3" fill="#fff"/><path d="M3.5 5.5 L11 11.5 M10.5 5 L3.8 12" stroke="#111" stroke-width="1.5" fill="none"/><path d="M4 6.5 L10 11 M9.8 5.8 L4.3 11.4" stroke="#e8e800" stroke-width="1" fill="none"/></svg>
<div class="sans" style="left:1282.5px;top:368px;font-size:11.56px;line-height:15px;color:#8a8a8a">Results histogram</div>
<svg style="left:1698px;top:368px" width="14" height="14" viewBox="0 0 14 14"><path d="M2 2 L12 12 M12 2 L2 12" stroke="#666" stroke-width="1"/></svg>
<div style="left:1253px;top:392px;width:2px;height:536px;background:#4a9a86"></div>
<div style="left:1718px;top:392px;width:2px;height:536px;background:#4a9a86"></div>
<div style="left:1257px;top:395px;width:103px;height:288px;background:#9fdada;border:1px solid #2d5f5f"></div>
<div style="left:1257px;top:395px;width:103px;height:138px;border:2px solid #000"></div>
<svg style="left:1263.5px;top:403.2px" width="15" height="15" viewBox="0 0 15 15"><path d="M7.5 0.8 L14.2 7.5 L7.5 14.2 L0.8 7.5 Z" fill="#9fdada"/><path d="M0.8 7.5 L7.5 0.8 L14.2 7.5" fill="none" stroke="#e0fafa" stroke-width="1.6"/><path d="M0.8 7.5 L7.5 14.2 L14.2 7.5" fill="none" stroke="#4f7f7f" stroke-width="1.6"/></svg>
<div class="m15" style="left:1282.5px;top:404.2px">Count</div>
<svg style="left:1263.5px;top:430.2px" width="15" height="15" viewBox="0 0 15 15"><path d="M7.5 0.8 L14.2 7.5 L7.5 14.2 L0.8 7.5 Z" fill="#9fdada"/><path d="M0.8 7.5 L7.5 0.8 L14.2 7.5" fill="none" stroke="#e0fafa" stroke-width="1.6"/><path d="M0.8 7.5 L7.5 14.2 L14.2 7.5" fill="none" stroke="#4f7f7f" stroke-width="1.6"/></svg>
<div class="m15" style="left:1282.5px;top:431.2px">Average</div>
<svg style="left:1263.5px;top:457.2px" width="15" height="15" viewBox="0 0 15 15"><path d="M7.5 0.8 L14.2 7.5 L7.5 14.2 L0.8 7.5 Z" fill="#9fdada"/><path d="M0.8 7.5 L7.5 0.8 L14.2 7.5" fill="none" stroke="#e0fafa" stroke-width="1.6"/><path d="M0.8 7.5 L7.5 14.2 L14.2 7.5" fill="none" stroke="#4f7f7f" stroke-width="1.6"/></svg>
<div class="m15" style="left:1282.5px;top:458.2px">Sum</div>
<svg style="left:1263.5px;top:484.2px" width="15" height="15" viewBox="0 0 15 15"><path d="M7.5 0.8 L14.2 7.5 L7.5 14.2 L0.8 7.5 Z" fill="#c81e50"/><path d="M0.8 7.5 L7.5 0.8 L14.2 7.5" fill="none" stroke="#4f7f7f" stroke-width="1.6"/><path d="M0.8 7.5 L7.5 14.2 L14.2 7.5" fill="none" stroke="#e0fafa" stroke-width="1.6"/></svg>
<div class="m15" style="left:1282.5px;top:485.2px">Min</div>
<svg style="left:1263.5px;top:511.20000000000005px" width="15" height="15" viewBox="0 0 15 15"><path d="M7.5 0.8 L14.2 7.5 L7.5 14.2 L0.8 7.5 Z" fill="#9fdada"/><path d="M0.8 7.5 L7.5 0.8 L14.2 7.5" fill="none" stroke="#e0fafa" stroke-width="1.6"/><path d="M0.8 7.5 L7.5 14.2 L14.2 7.5" fill="none" stroke="#4f7f7f" stroke-width="1.6"/></svg>
<div class="m15" style="left:1282.5px;top:512.2px">Max</div>
<div class="sc" style="left:1258.5px;top:534px;width:82px;height:114px;border-width:1.5px"></div>
<div style="left:1262px;top:538px;width:72px;height:15px;background:#000"></div>
<div class="m15" style="left:1262.5px;top:538.5px;color:#9fdada">Spacing</div>
<div class="sc" style="left:1343.5px;top:534px;width:15px;height:114px;border-width:1.5px;background:#8fc4c4"></div>
<svg style="left:1344.5px;top:535.5px" width="13" height="13" viewBox="0 0 13 13"><path d="M6.5 1 L12 11.5 H1 Z" fill="#9fdada"/><path d="M6.5 1 L12 11.5 H1" fill="none" stroke="#4f7f7f" stroke-width="1.2"/><path d="M6.5 1 L1 11.5" fill="none" stroke="#e0fafa" stroke-width="1.2"/></svg>
<svg style="left:1344.5px;top:633px" width="13" height="13" viewBox="0 0 13 13"><path d="M6.5 12 L12 1.5 H1 Z" fill="#9fdada"/><path d="M6.5 12 L12 1.5" fill="none" stroke="#4f7f7f" stroke-width="1.2"/><path d="M12 1.5 H1 L6.5 12" fill="none" stroke="#e0fafa" stroke-width="1.2"/></svg>
<div class="rc" style="left:1345.5px;top:549.5px;width:11px;height:83px;border-width:1.5px"></div>
<div class="rc" style="left:1261.5px;top:651px;width:29px;height:29px"></div><div style="left:1265.0px;top:654.5px;width:22px;height:22px;border:1px solid #000"></div><svg style="left:1265.0px;top:654.5px" width="22" height="22" viewBox="0 0 22 22"><text x="1.2" y="10.2" font-family="Liberation Serif" font-size="11.5" fill="#000" textLength="19.6" lengthAdjust="spacingAndGlyphs">DEL</text><path d="M0.5 10.8 H21.5" stroke="#000" stroke-width="0.8"/><circle cx="11.0" cy="16.3" r="3.4" fill="#ff2020" stroke="#300" stroke-width="0.5"/></svg>
<div class="rc" style="left:1295px;top:651px;width:29px;height:29px"></div><div style="left:1298.5px;top:654.5px;width:22px;height:22px;border:1px solid #000"></div><svg style="left:1298.5px;top:654.5px" width="22" height="22" viewBox="0 0 22 22"><text x="1.2" y="10.2" font-family="Liberation Serif" font-size="11.5" fill="#000" textLength="19.6" lengthAdjust="spacingAndGlyphs">REF</text><path d="M0.5 10.8 H21.5" stroke="#000" stroke-width="0.8"/><circle cx="11.0" cy="16.3" r="3.4" fill="#20e020" stroke="#300" stroke-width="0.5"/></svg>
<div style="left:1362.5px;top:397px;width:352.5px;height:283.5px;background:#9fdada;border:2px solid #000;border-top:1.5px solid #2d5f5f;border-left:1.5px solid #2d5f5f"></div>
<div style="left:1411px;top:402.5px;width:258px;height:21px;background:#8a9a9a"></div>
<div style="left:1409px;top:400.5px;width:258px;height:21px;background:#b4ffff;border:1px solid #000"></div>
<div class="m15" style="left:1412px;top:406px;font-style:italic">Size(Spacing) / Min(Spacing)</div>
<div style="left:1368.4px;top:523.9px;width:48.05px;height:38.10000000000002px;background:#ff1a1a;border:1px solid #5a0000;border-bottom:none"></div>
<div class="m15" style="left:1375.4250000000002px;top:510.4px;color:#e01818;font-weight:normal;-webkit-text-stroke:0.3px #e01818">4.42</div>
<div style="left:1368.4px;top:566.5px;width:48.05px;height:28px;background:#ff1a1a;border:1px solid #5a0000;overflow:hidden"><div class="m15" style="left:5px;top:3px;font-weight:normal;-webkit-text-stroke:0.3px #000;line-height:15px;color:#3a0000">4.4-<br> 4.5</div></div>
<div style="left:1416.45px;top:522.5px;width:48.05px;height:39.5px;background:#ff1a1a;border:1px solid #5a0000;border-bottom:none"></div>
<div class="m15" style="left:1418.9750000000001px;top:509.0px;color:#e01818;font-weight:normal;-webkit-text-stroke:0.3px #e01818">4.561</div>
<div style="left:1416.45px;top:566.5px;width:48.05px;height:28px;background:#ff1a1a;border:1px solid #5a0000;overflow:hidden"><div class="m15" style="left:5px;top:3px;font-weight:normal;-webkit-text-stroke:0.3px #000;line-height:15px;color:#3a0000">4.5-<br> 4.6</div></div>
<div style="left:1464.5px;top:521.5px;width:48.05px;height:40.5px;background:#ff1a1a;border:1px solid #5a0000;border-bottom:none"></div>
<div class="m15" style="left:1467.025px;top:508.0px;color:#e01818;font-weight:normal;-webkit-text-stroke:0.3px #e01818">4.729</div>
<div style="left:1464.5px;top:566.5px;width:48.05px;height:28px;background:#ff1a1a;border:1px solid #5a0000;overflow:hidden"><div class="m15" style="left:5px;top:3px;font-weight:normal;-webkit-text-stroke:0.3px #000;line-height:15px;color:#3a0000">4.7-<br> 4.8</div></div>
<div style="left:1512.5500000000002px;top:516px;width:48.05px;height:46px;background:#ff1a1a;border:1px solid #5a0000;border-bottom:none"></div>
<div class="m15" style="left:1515.0750000000003px;top:502.5px;color:#e01818;font-weight:normal;-webkit-text-stroke:0.3px #e01818">5.376</div>
<div style="left:1512.5500000000002px;top:566.5px;width:48.05px;height:28px;background:#ff1a1a;border:1px solid #5a0000;overflow:hidden"><div class="m15" style="left:5px;top:3px;font-weight:normal;-webkit-text-stroke:0.3px #000;line-height:15px;color:#3a0000">5.3-<br> 5.4</div></div>
<div style="left:1560.6000000000001px;top:511.6px;width:48.05px;height:50.39999999999998px;background:#ff1a1a;border:1px solid #5a0000;border-bottom:none"></div>
<div class="m15" style="left:1562.1250000000002px;top:498.1px;color:#000;font-weight:normal;-webkit-text-stroke:0.3px #000">5.814</div>
<div style="left:1560.6000000000001px;top:566.5px;width:48.05px;height:28px;background:#ff1a1a;border:1px solid #5a0000;overflow:hidden"><div class="m15" style="left:5px;top:3px;font-weight:normal;-webkit-text-stroke:0.3px #000;line-height:15px;color:#3a0000">5.8-<br> 5.9</div></div>
<div style="left:1608.65px;top:507.7px;width:48.05px;height:54.30000000000001px;background:#ff1a1a;border:1px solid #5a0000;border-bottom:none"></div>
<div class="m15" style="left:1614.6750000000002px;top:494.2px;color:#000;font-weight:normal;-webkit-text-stroke:0.3px #000">6.28</div>
<div style="left:1608.65px;top:566.5px;width:48.05px;height:28px;background:#ff1a1a;border:1px solid #5a0000;overflow:hidden"><div class="m15" style="left:5px;top:3px;font-weight:normal;-webkit-text-stroke:0.3px #000;line-height:15px;color:#3a0000">6.2-<br> 6.3</div></div>
<div style="left:1656.7px;top:506.3px;width:48.05px;height:55.69999999999999px;background:#ff1a1a;border:1px solid #5a0000;border-bottom:none"></div>
<div class="m15" style="left:1662.7250000000001px;top:492.8px;color:#000;font-weight:normal;-webkit-text-stroke:0.3px #000">6.39</div>
<div style="left:1656.7px;top:566.5px;width:48.05px;height:28px;background:#ff1a1a;border:1px solid #5a0000;overflow:hidden"><div class="m15" style="left:5px;top:3px;font-weight:normal;-webkit-text-stroke:0.3px #000;line-height:15px;color:#3a0000">6.3-<br> 6.4</div></div>
<div style="left:1363px;top:561px;width:351px;height:4.5px;background:#000"></div>
<div class="sc" style="left:1364px;top:603.5px;width:349px;height:13.5px;border-width:1.5px;background:#8cbcbc"></div>
<svg style="left:1365px;top:604px" width="13" height="13" viewBox="0 0 13 13"><path d="M1 6.5 L11.5 1 V12 Z" fill="#9fdada"/><path d="M1 6.5 L11.5 12 V1" fill="none" stroke="#4f7f7f" stroke-width="1.2"/><path d="M11.5 1 L1 6.5" fill="none" stroke="#e0fafa" stroke-width="1.2"/></svg>
<svg style="left:1699px;top:604px" width="13" height="13" viewBox="0 0 13 13"><path d="M12 6.5 L1.5 1 V12 Z" fill="#9fdada"/><path d="M12 6.5 L1.5 12" fill="none" stroke="#4f7f7f" stroke-width="1.2"/><path d="M1.5 12 V1 L12 6.5" fill="none" stroke="#e0fafa" stroke-width="1.2"/></svg>
<div class="rc" style="left:1377px;top:605px;width:46.5px;height:10.5px;border-width:1.5px"></div>
<div style="left:1363px;top:617.5px;width:351px;height:62px;background:#000"></div>
<div class="sc" style="left:1364.5px;top:619px;width:73px;height:59.5px;border-width:1.5px"></div>
<div style="left:1368.5px;top:623.5px;width:64px;height:15px;background:#000"></div>
<div class="m15" style="left:1369px;top:624.5px;color:#9fdada">Spacing</div>
<div class="m15" style="left:1369px;top:642.5px">Hole</div>
<div class="m15" style="left:1369px;top:660.5px">Feature</div>
<div class="sc" style="left:1441.5px;top:619px;width:14.5px;height:59.5px;border-width:1.5px;background:#9fdada"></div>
<svg style="left:1442.5px;top:620px" width="13" height="13" viewBox="0 0 13 13"><path d="M6.5 1 L12 11.5 H1 Z" fill="#9fdada"/><path d="M6.5 1 L12 11.5 H1" fill="none" stroke="#4f7f7f" stroke-width="1.2"/><path d="M6.5 1 L1 11.5" fill="none" stroke="#e0fafa" stroke-width="1.2"/></svg>
<svg style="left:1442.5px;top:664.5px" width="13" height="13" viewBox="0 0 13 13"><path d="M6.5 12 L12 1.5 H1 Z" fill="#9fdada"/><path d="M6.5 12 L12 1.5" fill="none" stroke="#4f7f7f" stroke-width="1.2"/><path d="M12 1.5 H1 L6.5 12" fill="none" stroke="#e0fafa" stroke-width="1.2"/></svg>
<div class="rc" style="left:1443.5px;top:633.5px;width:10.5px;height:30px;border-width:1.5px"></div>
<div style="left:1457px;top:619px;width:255px;height:59.5px;background:#9fdada"></div>
<div class="m15" style="left:1538.5px;top:622px">Resolution</div>
<div class="m15" style="left:1463.5px;top:644.5px;font-weight:normal;-webkit-text-stroke:0.3px #000">0.1</div>
<div class="sc" style="left:1459.5px;top:661.5px;width:249.5px;height:14.5px;border-width:1.5px;background:#8cbcbc"></div>
<div class="rc" style="left:1461.5px;top:663px;width:15px;height:11.5px;border-width:1.5px"></div>
<div class="rc" style="left:1476.5px;top:663px;width:15px;height:11.5px;border-width:1.5px"></div>
<div style="left:1255px;top:686.5px;width:463px;height:1.5px;background:#37806e"></div>
<div style="left:1255px;top:688px;width:463px;height:1.5px;background:#a4ecdb"></div>
<div class="rt" style="left:1699.5px;top:683px;width:9px;height:9px;border-width:1.5px"></div>
<div style="left:1258.5px;top:692.5px;width:456.5px;height:162.5px;background:#56cdb1;border:1.5px solid #1f4f45"></div>
<div style="left:1425px;top:713px;width:122px;height:122px;background:#9fdada;border:2px solid #000"></div>
<div style="left:1461.8px;top:726.2px;width:3px;height:3px;background:#e010e0"></div>
<div style="left:1503.0px;top:726.9px;width:3px;height:3px;background:#e010e0"></div>
<div style="left:1486.0px;top:735.0px;width:3px;height:3px;background:#e010e0"></div>
<div style="left:1507.8px;top:734.0px;width:3px;height:3px;background:#e010e0"></div>
<div style="left:1503.0px;top:748.0px;width:3px;height:3px;background:#e010e0"></div>
<div style="left:1503.0px;top:768.1px;width:3px;height:3px;background:#e010e0"></div>
<div style="left:1507.8px;top:775.9px;width:3px;height:3px;background:#e010e0"></div>
<div style="left:1446.8px;top:774.9px;width:3px;height:3px;background:#e010e0"></div>
<div style="left:1467.9px;top:790.9px;width:3px;height:3px;background:#e010e0"></div>
<div style="left:1480.6px;top:794.7px;width:3px;height:3px;background:#e010e0"></div>
<div style="left:1488.8px;top:789.9px;width:3px;height:3px;background:#e010e0"></div>
<div style="left:1508.8px;top:789.9px;width:3px;height:3px;background:#e010e0"></div>
<div style="left:1522.8px;top:794.7px;width:3px;height:3px;background:#e010e0"></div>
<div style="left:1529.9px;top:789.9px;width:3px;height:3px;background:#e010e0"></div>
<div style="left:1529.9px;top:811.0px;width:3px;height:3px;background:#e010e0"></div>
<div style="left:1524.1px;top:727.7px;width:3px;height:3px;background:#e010e0"></div>
<div style="left:1522px;top:727px;width:3px;height:1px;background:#000"></div><div style="left:1524px;top:730.2px;width:5px;height:1px;background:#000"></div>
<div class="rc" style="left:1259px;top:858.5px;width:30.5px;height:38px"></div>
<div style="left:1263.0px;top:866.0px;width:22.4px;height:22.4px;border:1px solid #000"></div><svg style="left:1263.0px;top:866.0px" width="22.4" height="22.4" viewBox="0 0 22.4 22.4"><text x="1.2" y="10.2" font-family="Liberation Serif" font-size="11.5" fill="#000" textLength="20.0" lengthAdjust="spacingAndGlyphs">DEL</text><path d="M0.5 10.8 H21.9" stroke="#000" stroke-width="0.8"/><circle cx="11.2" cy="16.5" r="3.4" fill="#ff2020" stroke="#300" stroke-width="0.5"/></svg>
<div class="rc" style="left:1293.5px;top:858.5px;width:30.5px;height:38px"></div>
<div style="left:1297.5px;top:866.0px;width:22.4px;height:22.4px;border:1px solid #000"></div><svg style="left:1297.5px;top:866.0px" width="22.4" height="22.4" viewBox="0 0 22.4 22.4"><text x="1.2" y="10.2" font-family="Liberation Serif" font-size="11.5" fill="#000" textLength="20.0" lengthAdjust="spacingAndGlyphs">REF</text><path d="M0.5 10.8 H21.9" stroke="#000" stroke-width="0.8"/><circle cx="11.2" cy="16.5" r="3.4" fill="#20e020" stroke="#300" stroke-width="0.5"/></svg>
<div style="left:1325.5px;top:858px;width:306.5px;height:40px;background:#9fdada;border:1px solid #2d5f5f"></div>
<div class="m15" style="left:1328.5px;top:870.5px">4074 measurements for 1 layer</div>
<div class="rc" style="left:1635px;top:858.5px;width:37px;height:38.5px"></div>
<div style="left:1639px;top:862.5px;width:29px;height:30.5px;border:1px solid #000"></div>
<svg style="left:1641px;top:865px" width="24" height="25" viewBox="0 0 24 25"><rect x="2.5" y="3" width="9" height="10" fill="#e01010" stroke="#0000d0" stroke-width="1.6"/><path d="M4 9 V6 H6 V8 H8 V5 H10" stroke="#fff" stroke-width="1" fill="none"/><path d="M13 5 H18.5 V12 M16.5 10 L18.5 12.5 L20.5 10" stroke="#000" stroke-width="1.1" fill="none"/><rect x="14.5" y="15.5" width="6" height="6" fill="none" stroke="#0000d0" stroke-width="1.6"/></svg>
<div class="rc" style="left:1677px;top:858.5px;width:37px;height:38.5px"></div>
<div style="left:1681px;top:862.5px;width:29px;height:30.5px;border:1px solid #000"></div>
<svg style="left:1683px;top:865px" width="24" height="25" viewBox="0 0 24 25"><rect x="2.5" y="3" width="9" height="10" fill="#e01010" stroke="#0000d0" stroke-width="1.6"/><path d="M4 9 V6 H6 V8 H8 V5 H10" stroke="#fff" stroke-width="1" fill="none"/><path d="M13 19.5 H4.5 V15 M2.5 17 L4.5 14.5 L6.5 17" stroke="#000" stroke-width="1.1" fill="none"/><rect x="15" y="15.5" width="6" height="6" fill="none" stroke="#0000d0" stroke-width="1.6"/></svg>
<div class="rc" style="left:1254px;top:903px;width:465px;height:26.5px;border-radius:0 0 5px 5px"></div><div class="m15" style="left:1464.0px;top:908.75px;">Close</div>
<div style="left:0;top:973.5px;width:1919px;height:2.5px;background:#000"></div>
<div style="left:0;top:975.5px;width:1919px;height:32px;background:#ffffd2"></div>
<div style="left:1px;top:976px;width:31px;height:31px;background:#ffffd2;border:2px solid;border-color:#fffff0 #b4b48a #b4b48a #fffff0"></div>
<svg style="left:7px;top:981px" width="20" height="21" viewBox="0 0 20 21"><rect x="0.5" y="0.5" width="19" height="19.5" fill="none" stroke="#000" stroke-width="1.4"/><path d="M4 4 L15 15 M4 4 V9 M4 4 H9 M15 15 V10 M15 15 H10" stroke="#000" stroke-width="1.2" fill="none"/></svg>
<div style="left:34px;top:976px;width:31px;height:31px;background:#ffffd2;border:2px solid;border-color:#fffff0 #b4b48a #b4b48a #fffff0"></div>
<svg style="left:39px;top:981px" width="20" height="21" viewBox="0 0 20 21"><rect x="0.5" y="0.5" width="19" height="19.5" fill="none" stroke="#000" stroke-width="1.4"/><path d="M3 17 L15 3 M3 17 H16 M6 6 V9 H8 M11 13 H15 M11 15 H15" stroke="#000" stroke-width="1.1" fill="none"/></svg>
<div style="left:66px;top:975.5px;width:29px;height:32px;background:#56cdb1"></div>
<div style="left:68px;top:978px;width:24px;height:26px;background:#ffffd2;border:2px solid;border-color:#b4b48a #fffff0 #fffff0 #b4b48a"></div>
<svg style="left:72px;top:983px" width="16" height="16" viewBox="0 0 16 16"><rect x="0.7" y="0.7" width="14.6" height="14.6" fill="none" stroke="#000" stroke-width="1.3"/><path d="M8 1 V15 M1 8 H15 M1 5 L5 1" stroke="#000" stroke-width="1.1" fill="none"/></svg>
<div class="m11" style="left:98px;top:984px;letter-spacing:1.6px">X Y :</div>
<div style="left:143px;top:976.5px;width:173px;height:30px;background:#ffffd2;border:2px solid;border-color:#a9a984 #e6e6bd #e6e6bd #a9a984"></div>
<div style="left:152px;top:980px;width:1px;height:13px;border-left:1px dotted #000"></div>
<div style="left:318px;top:975.5px;width:29px;height:32px;background:#56cdb1"></div>
<div style="left:320px;top:978px;width:25px;height:27px;background:#ffffd2;border:2px solid;border-color:#b4b48a #fffff0 #fffff0 #b4b48a"></div>
<svg style="left:325px;top:983px" width="15" height="16" viewBox="0 0 15 16"><rect x="0.6" y="0.6" width="13.8" height="14.8" fill="none" stroke="#000" stroke-width="1.1"/><path d="M7.5 3 V10 M7.5 12 V13.6" stroke="#000" stroke-width="1.6"/></svg>
<div class="m11" style="left:351px;top:984px;">&lt;M1&gt; - Select first corner</div>
<div style="left:1840px;top:975.5px;width:79px;height:32px;background:#56cdb1;border-left:1px solid #000"></div>
<div class="rt" style="left:1845px;top:978px;width:71px;height:27px"></div>
<div class="m15" style="left:1853.5px;top:983.5px;">Inch</div>
<div class="rt" style="left:1896px;top:988px;width:12px;height:7px;border-width:1.5px"></div>
<div style="left:0;top:1007px;width:1919px;height:5px;background:#000"></div>
<div style="left:0;top:1008.5px;width:1919px;height:1.5px;background:#6f9f9f"></div>
<div style="left:0;top:1011.5px;width:1919px;height:26px;background:#4f8f8f"></div>
<div style="left:3px;top:1012px;width:1914px;height:23px;background:#b4ffff;border:1.5px solid;border-color:#e8ffff #5fb0a8 #5fb0a8 #e8ffff"></div>
<div style="left:0;top:1036px;width:1919px;height:1.5px;background:#000"></div>
<svg style="left:0;top:1037.5px" width="1919" height="25.5" viewBox="0 1037.5 1919 25.5">
<defs><linearGradient id="tb" x1="0" x2="1"><stop offset="0" stop-color="#e4e8f4"/><stop offset="1" stop-color="#e9eaf5"/></linearGradient></defs>
<rect x="0" y="1037.5" width="1919" height="25.5" fill="url(#tb)"/>
<rect x="1240" y="1042" width="80" height="30" rx="4" fill="#f5f6fb"/>
<rect x="13" y="1049.3" width="9.5" height="9.5" fill="#3f97e8"/><rect x="23.5" y="1049.3" width="9.5" height="9.5" fill="#2f86dc"/><rect x="13" y="1059.8" width="9.5" height="9.5" fill="#2f86dc"/><rect x="23.5" y="1059.8" width="9.5" height="9.5" fill="#1f76d0"/>
<path d="M64 1048.5 H77 L73 1066 H60 Z" fill="#fff" stroke="#9aa" stroke-width="0.8"/><circle cx="72" cy="1060" r="8" fill="#1f9e4a"/><path d="M67 1055 H77 M67 1055 V1066 M67 1060.5 H75" stroke="#fff" stroke-width="2.4"/>
<path d="M86.5 1054 H97.0 M91.7 1052 V1066 M87.5 1059 H96.0 M88.0 1056.5 L87.0 1062 M95.0 1056.5 L96.5 1062" stroke="#222" stroke-width="1.1" fill="none"/><path d="M99.0 1053.5 H103.5 V1060 H99.0 Z M105.0 1053 H109.5 M107.3 1053 V1066 M105.0 1057.5 H109.5 M105.0 1062 H109.5" stroke="#222" stroke-width="1.1" fill="none"/>
<text x="111" y="1061.6" font-family="Liberation Sans" font-size="11.8" fill="#1c1c1c">...</text>
<path d="M141.7 1050.5 H151 L153.5 1053 H166 V1068 H141.7 Z" fill="#e8a317"/><rect x="141.7" y="1054" width="24.3" height="14" fill="#f7c23c"/>
<rect x="187" y="1048" width="18" height="20" rx="1.5" fill="#7b8088"/><rect x="188.5" y="1049.5" width="15" height="4.5" fill="#3fa9f5"/><g fill="#e8e8ee"><rect x="188.5" y="1056" width="4" height="3.5"/><rect x="194" y="1056" width="4" height="3.5"/><rect x="199.5" y="1056" width="4" height="3.5"/><rect x="188.5" y="1061" width="4" height="3"/><rect x="194" y="1061" width="4" height="3"/></g><rect x="199.5" y="1061" width="4" height="3" fill="#1f4f9f"/>
<circle cx="235.5" cy="1061" r="9" fill="none" stroke="#6cc04a" stroke-width="3.5"/><path d="M228 1052 Q236 1046 246 1049" stroke="#6cc04a" stroke-width="2.2" fill="none"/><path d="M229 1061 H243" stroke="#6cc04a" stroke-width="3"/>
<path d="M251.5 1054 H262.0 M256.7 1052 V1066 M252.5 1059 H261.0 M253.0 1056.5 L252.0 1062 M260.0 1056.5 L261.5 1062" stroke="#222" stroke-width="1.1" fill="none"/><path d="M264.0 1053.5 H268.5 V1060 H264.0 Z M270.0 1053 H274.5 M272.3 1053 V1066 M270.0 1057.5 H274.5 M270.0 1062 H274.5" stroke="#222" stroke-width="1.1" fill="none"/>
<text x="276" y="1061.6" font-family="Liberation Sans" font-size="11.8" fill="#1c1c1c">-...</text>
<circle cx="319" cy="1061" r="12.5" fill="#1b8fd8"/><path d="M307.5 1058 Q313 1047.5 326 1050 Q331 1053 331.5 1059" fill="#35c3c1"/><circle cx="319.5" cy="1062" r="4" fill="#e7e9f4"/>
<ellipse cx="357" cy="1060" rx="11.5" ry="8" fill="#2f7f86"/><ellipse cx="358" cy="1060.5" rx="5.5" ry="4.5" fill="#f0d23c"/><circle cx="358" cy="1060.5" r="2.2" fill="#123"/><path d="M345 1053.5 Q349 1049 356 1051.5 L350 1055 Z" fill="#3f9fa6"/>
<text x="374" y="1061.6" font-family="Liberation Sans" font-size="11.8" fill="#1c1c1c">Gene...</text>
<path d="M428 1048 H448 L451 1051 V1068 H428 Z" fill="#1f3fbf"/><rect x="432" y="1048" width="13" height="6.5" fill="#e8ecff"/><rect x="441" y="1049" width="2.5" height="4.5" fill="#1f3fbf"/><rect x="431" y="1058" width="17" height="10" fill="#f4f4fa"/><path d="M431 1059 H448" stroke="#e05a5a" stroke-width="1"/>
<text x="456" y="1061.6" font-family="Liberation Sans" font-size="11.8" fill="#1c1c1c">Admi...</text>
<circle cx="521.5" cy="1061" r="11.5" fill="#f6c86a"/><circle cx="521.5" cy="1061" r="7" fill="#f0a030"/><path d="M521.5 1050 V1072 M511 1061 H532 M514 1053.5 L529 1068.5 M529 1053.5 L514 1068.5" stroke="#f8dc9a" stroke-width="1"/><path d="M518 1058 L521.5 1055 L525 1058 L523.5 1062.5 H519.5 Z" fill="#e4572a"/>
<path d="M537.5 1054 H548.0 M542.7 1052 V1066 M538.5 1059 H547.0 M539.0 1056.5 L538.0 1062 M546.0 1056.5 L547.5 1062" stroke="#222" stroke-width="1.1" fill="none"/><path d="M550.0 1053.5 H554.5 V1060 H550.0 Z M556.0 1053 H560.5 M558.3 1053 V1066 M556.0 1057.5 H560.5 M556.0 1062 H560.5" stroke="#222" stroke-width="1.1" fill="none"/>
<text x="562" y="1061.6" font-family="Liberation Sans" font-size="11.8" fill="#1c1c1c">...</text>
<ellipse cx="604" cy="1060" rx="11.5" ry="8" fill="#2f7f86"/><ellipse cx="605" cy="1060.5" rx="5.5" ry="4.5" fill="#f0d23c"/><circle cx="605" cy="1060.5" r="2.2" fill="#123"/><path d="M592 1053.5 Q596 1049 603 1051.5 L597 1055 Z" fill="#3f9fa6"/>
<text x="620" y="1061.6" font-family="Liberation Sans" font-size="11.8" fill="#1c1c1c">CAM...</text>
<path d="M681 1049.5 H691 L695 1053.5 V1068 H681 Z" fill="#fff" stroke="#8a9" stroke-width="0.8"/><path d="M684 1056 H693 M684 1059 H693 M684 1062 H693 M688.5 1054 V1066" stroke="#9bb" stroke-width="0.7"/><rect x="675" y="1048.5" width="11.5" height="10.5" rx="1.5" fill="#1e7c45" stroke="#cfe8d8" stroke-width="0.8"/><path d="M678 1051 L683.5 1056.5 M683.5 1051 L678 1056.5" stroke="#fff" stroke-width="1.3"/>
<text x="701.5" y="1061.6" font-family="Liberation Sans" font-size="11.8" fill="#1c1c1c">9V3R...</text>
<path d="M761 1049.5 H771 L775 1053.5 V1068 H761 Z" fill="#fff" stroke="#8a9" stroke-width="0.8"/><path d="M764 1056 H773 M764 1059 H773 M764 1062 H773 M768.5 1054 V1066" stroke="#9bb" stroke-width="0.7"/><rect x="755" y="1048.5" width="11.5" height="10.5" rx="1.5" fill="#1e7c45" stroke="#cfe8d8" stroke-width="0.8"/><path d="M758 1051 L763.5 1056.5 M763.5 1051 L758 1056.5" stroke="#fff" stroke-width="1.3"/>
<path d="M783.5 1054 H794.0 M788.7 1052 V1066 M784.5 1059 H793.0 M785.0 1056.5 L784.0 1062 M792.0 1056.5 L793.5 1062" stroke="#222" stroke-width="1.1" fill="none"/><path d="M796.0 1053.5 H800.5 V1060 H796.0 Z M802.0 1053 H806.5 M804.3 1053 V1066 M802.0 1057.5 H806.5 M802.0 1062 H806.5" stroke="#222" stroke-width="1.1" fill="none"/>
<text x="808.5" y="1061.6" font-family="Liberation Sans" font-size="11.8" fill="#1c1c1c">C...</text>
<path d="M840 1048.5 H857 Q861 1048.5 860 1052 L859.3 1054.5 H839.5 Z M838.5 1056 H858.8 L858 1059.5 H846 L845.5 1061 H857.7 L856.5 1066 H838 Z" fill="#1fa050"/><path d="M843 1052 H854 M849 1058 H857" stroke="#e7e9f4" stroke-width="1.6"/>
<text x="865" y="1061.6" font-family="Liberation Sans" font-size="11.8" fill="#1c1c1c">EDS...</text>
<rect x="920" y="1049" width="21" height="19" rx="2" fill="#2f8ad8"/><path d="M934 1049 V1057 L936.5 1055 L939 1057 V1049" fill="#bfe0ff"/><rect x="920" y="1049" width="3" height="19" fill="#1f6ab8"/>
<path d="M947.5 1054 H958.0 M952.7 1052 V1066 M948.5 1059 H957.0 M949.0 1056.5 L948.0 1062 M956.0 1056.5 L957.5 1062" stroke="#222" stroke-width="1.1" fill="none"/><path d="M960.0 1053.5 H964.5 V1060 H960.0 Z M966.0 1053 H970.5 M968.3 1053 V1066 M966.0 1057.5 H970.5 M966.0 1062 H970.5" stroke="#222" stroke-width="1.1" fill="none"/>
<text x="972" y="1061.6" font-family="Liberation Sans" font-size="11.8" fill="#1c1c1c">...</text>
<rect x="1004" y="1050" width="17" height="18" rx="1.5" fill="#3f9fe0"/><path d="M1007 1055 H1018 M1007 1058.5 H1018 M1007 1062 H1018" stroke="#e8f4ff" stroke-width="1.3"/><path d="M1006.5 1048.5 V1051.5 M1010 1048.5 V1051.5 M1013.5 1048.5 V1051.5 M1017 1048.5 V1051.5" stroke="#2a6aa8" stroke-width="1.4"/>
<text x="1028" y="1061.6" font-family="Liberation Sans" font-size="11.8" fill="#1c1c1c">9v3r...</text>
<rect x="1087" y="1050" width="16" height="18" fill="#f4f6fb" stroke="#a8b4c8" stroke-width="0.8"/><path d="M1089.5 1053.5 H1100.5 M1089.5 1056.5 H1100.5 M1089.5 1059.5 H1100.5 M1089.5 1062.5 H1100.5" stroke="#4f9fe0" stroke-width="1.3"/>
<path d="M1110.5 1054 H1121.0 M1115.7 1052 V1066 M1111.5 1059 H1120.0 M1112.0 1056.5 L1111.0 1062 M1119.0 1056.5 L1120.5 1062" stroke="#222" stroke-width="1.1" fill="none"/><path d="M1123.0 1053.5 H1127.5 V1060 H1123.0 Z M1129.0 1053 H1133.5 M1131.3 1053 V1066 M1129.0 1057.5 H1133.5 M1129.0 1062 H1133.5" stroke="#222" stroke-width="1.1" fill="none"/>
<text x="1135" y="1061.6" font-family="Liberation Sans" font-size="11.8" fill="#1c1c1c">...</text>
<rect x="1165" y="1049.5" width="23" height="20" fill="#111"/><rect x="1166.5" y="1051.0" width="19.5" height="17" fill="#ffffe8"/><rect x="1166.5" y="1051.0" width="19.5" height="3.6" fill="#14148c"/><rect x="1179" y="1051.8" width="1.8" height="1.8" fill="#fff"/><rect x="1182" y="1051.8" width="1.8" height="1.8" fill="#fff"/><path d="M1170 1057.5 L1181 1068.5 M1181 1057.5 L1170 1068.5" stroke="#111" stroke-width="2.4"/><path d="M1170.5 1058.0 L1180.5 1068.0 M1180.5 1058.0 L1170.5 1068.0" stroke="#d8d800" stroke-width="1.3"/>
<text x="1192.5" y="1061.6" font-family="Liberation Sans" font-size="11.8" fill="#1c1c1c">Engin...</text>
<rect x="1245" y="1049.5" width="23" height="20" fill="#111"/><rect x="1246.5" y="1051.0" width="19.5" height="17" fill="#ffffe8"/><rect x="1246.5" y="1051.0" width="19.5" height="3.6" fill="#14148c"/><rect x="1259" y="1051.8" width="1.8" height="1.8" fill="#fff"/><rect x="1262" y="1051.8" width="1.8" height="1.8" fill="#fff"/><path d="M1250 1057.5 L1261 1068.5 M1261 1057.5 L1250 1068.5" stroke="#111" stroke-width="2.4"/><path d="M1250.5 1058.0 L1260.5 1068.0 M1260.5 1058.0 L1250.5 1068.0" stroke="#d8d800" stroke-width="1.3"/>
<text x="1273" y="1061.6" font-family="Liberation Sans" font-size="11.8" fill="#1c1c1c">Grap...</text>
<rect x="1327" y="1049.5" width="23" height="20" fill="#111"/><rect x="1328.5" y="1051.0" width="19.5" height="17" fill="#ffffe8"/><rect x="1328.5" y="1051.0" width="19.5" height="3.6" fill="#14148c"/><rect x="1341" y="1051.8" width="1.8" height="1.8" fill="#fff"/><rect x="1344" y="1051.8" width="1.8" height="1.8" fill="#fff"/><path d="M1332 1057.5 L1343 1068.5 M1343 1057.5 L1332 1068.5" stroke="#111" stroke-width="2.4"/><path d="M1332.5 1058.0 L1342.5 1068.0 M1342.5 1058.0 L1332.5 1068.0" stroke="#d8d800" stroke-width="1.3"/>
<text x="1355" y="1061.6" font-family="Liberation Sans" font-size="11.8" fill="#1c1c1c">Prog...</text>
<g transform="translate(0,1.5)">
<circle cx="1417" cy="1061" r="7" fill="#3f8fe8"/><circle cx="1417" cy="1061" r="3" fill="#e7e9f4"/>
<circle cx="1441" cy="1061" r="8" fill="#e84a3a"/><path d="M1433 1061 a8 8 0 0 1 12 -6.9 L1441 1061 Z" fill="#e84a3a"/><path d="M1441 1061 L1445 1054.1 a8 8 0 0 1 3 11 Z" fill="#f7c02c"/><path d="M1434 1057 a8 8 0 0 0 7 12 l0 -8 Z" fill="#3aa757"/><circle cx="1441" cy="1061" r="3.4" fill="#4a8af4" stroke="#fff" stroke-width="1"/>
<rect x="1457" y="1052.5" width="15" height="14" rx="2" fill="#1f8fe8"/><path d="M1461 1055 L1468 1061 L1462 1066" stroke="#fff" stroke-width="2" fill="none"/>
<path d="M1481 1053 L1495 1068 M1495 1053 L1481 1068" stroke="#7a1fa0" stroke-width="2.4"/>
<circle cx="1513" cy="1062" r="7.5" fill="#fff" stroke="#3ab44a" stroke-width="1.6"/><path d="M1510.5 1057.5 V1066.5 M1516 1057.5 L1511 1062 L1516 1066.5" stroke="#3ab44a" stroke-width="1.5" fill="none"/>
<rect x="1530" y="1051" width="15" height="17" rx="1.5" fill="#2f8ad8"/><path d="M1540 1051 V1058 L1542 1056.5 L1544 1058 V1051" fill="#bfe0ff"/>
<circle cx="1561" cy="1062" r="8" fill="#555"/><rect x="1556.5" y="1059" width="9" height="5" rx="1" fill="#eee"/><rect x="1558" y="1056" width="6" height="3" fill="#ccc"/>
<path d="M1580.5 1056 L1588 1063 L1584.3 1067 V1051 L1588 1055 L1580.5 1062" stroke="#111" stroke-width="1.2" fill="none"/>
<path d="M1603 1068 L1611 1054 L1614 1068 Z" fill="#e02a2a"/><path d="M1603 1068 L1608.5 1058 L1609 1068 Z" fill="#2ab84a"/>
<ellipse cx="1629" cy="1060" rx="6.5" ry="5.5" fill="#2ecc5a"/><ellipse cx="1636" cy="1064" rx="5" ry="4.2" fill="#dff5e4" stroke="#2ecc5a" stroke-width="0.8"/><circle cx="1627" cy="1058.5" r="0.8" fill="#fff"/><circle cx="1631" cy="1058.5" r="0.8" fill="#fff"/>
<circle cx="1657" cy="1062" r="7.5" fill="none" stroke="#3f7fb8" stroke-width="1.6"/><path d="M1652 1062 Q1657 1054 1662 1060 H1653.5 Q1654 1067 1661.5 1065" stroke="#2f9f9f" stroke-width="1.8" fill="none"/>
<rect x="1673.5" y="1053.5" width="14" height="13" rx="1.5" fill="none" stroke="#111" stroke-width="1.2"/><rect x="1685" y="1051.5" width="4.5" height="8" rx="1" fill="#e7e9f4" stroke="#111" stroke-width="1.1"/>
<path d="M1697 1059 H1700 L1704.5 1055 V1068 L1700 1064.5 H1697 Z" fill="none" stroke="#111" stroke-width="1.1"/><path d="M1707 1058 Q1709.5 1061.5 1707 1065" stroke="#111" stroke-width="1" fill="none"/><path d="M1709.5 1055.5 Q1714 1061.5 1709.5 1067.5" stroke="#bbb" stroke-width="1" fill="none"/>
<rect x="1720.5" y="1052.5" width="15" height="15" rx="2.5" fill="#8a6ae8"/><path d="M1724 1064 L1731 1056 M1731.5 1059 l1 -2 2 -.5" stroke="#fff" stroke-width="1.4" fill="none"/>
<path d="M1745 1055.5 H1759 M1748.5 1053 V1058 M1755.5 1053 V1058 M1746 1060 H1758 V1066 H1746 Z M1752 1058 V1068 M1745 1063 H1759" stroke="#555" stroke-width="1.1" fill="none"/>
<g transform="rotate(-8 1780 1062)"><rect x="1771" y="1052" width="19" height="19" rx="4" fill="#f0582a"/><path d="M1785.5 1057 Q1780 1054 1776 1056.5 Q1773.5 1059 1777.5 1061 L1783 1063 Q1786.5 1065 1783.5 1067.5" fill="none" stroke="#fff" stroke-width="2.4" stroke-linecap="round"/></g>
</g>
<text x="1815.9" y="1055.2" font-family="Liberation Sans" font-size="12" fill="#1c1c1c">14:47:54</text>
<circle cx="1898" cy="1058.5" r="4.8" fill="#111"/><path d="M1889.5 1072 Q1890 1063.5 1898 1063.5 Q1906 1063.5 1906.5 1072 Z" fill="#111"/><circle cx="1906.5" cy="1066" r="4.5" fill="#e7e9f4" stroke="#555" stroke-width="0.8"/>
</svg>
</body></html>
